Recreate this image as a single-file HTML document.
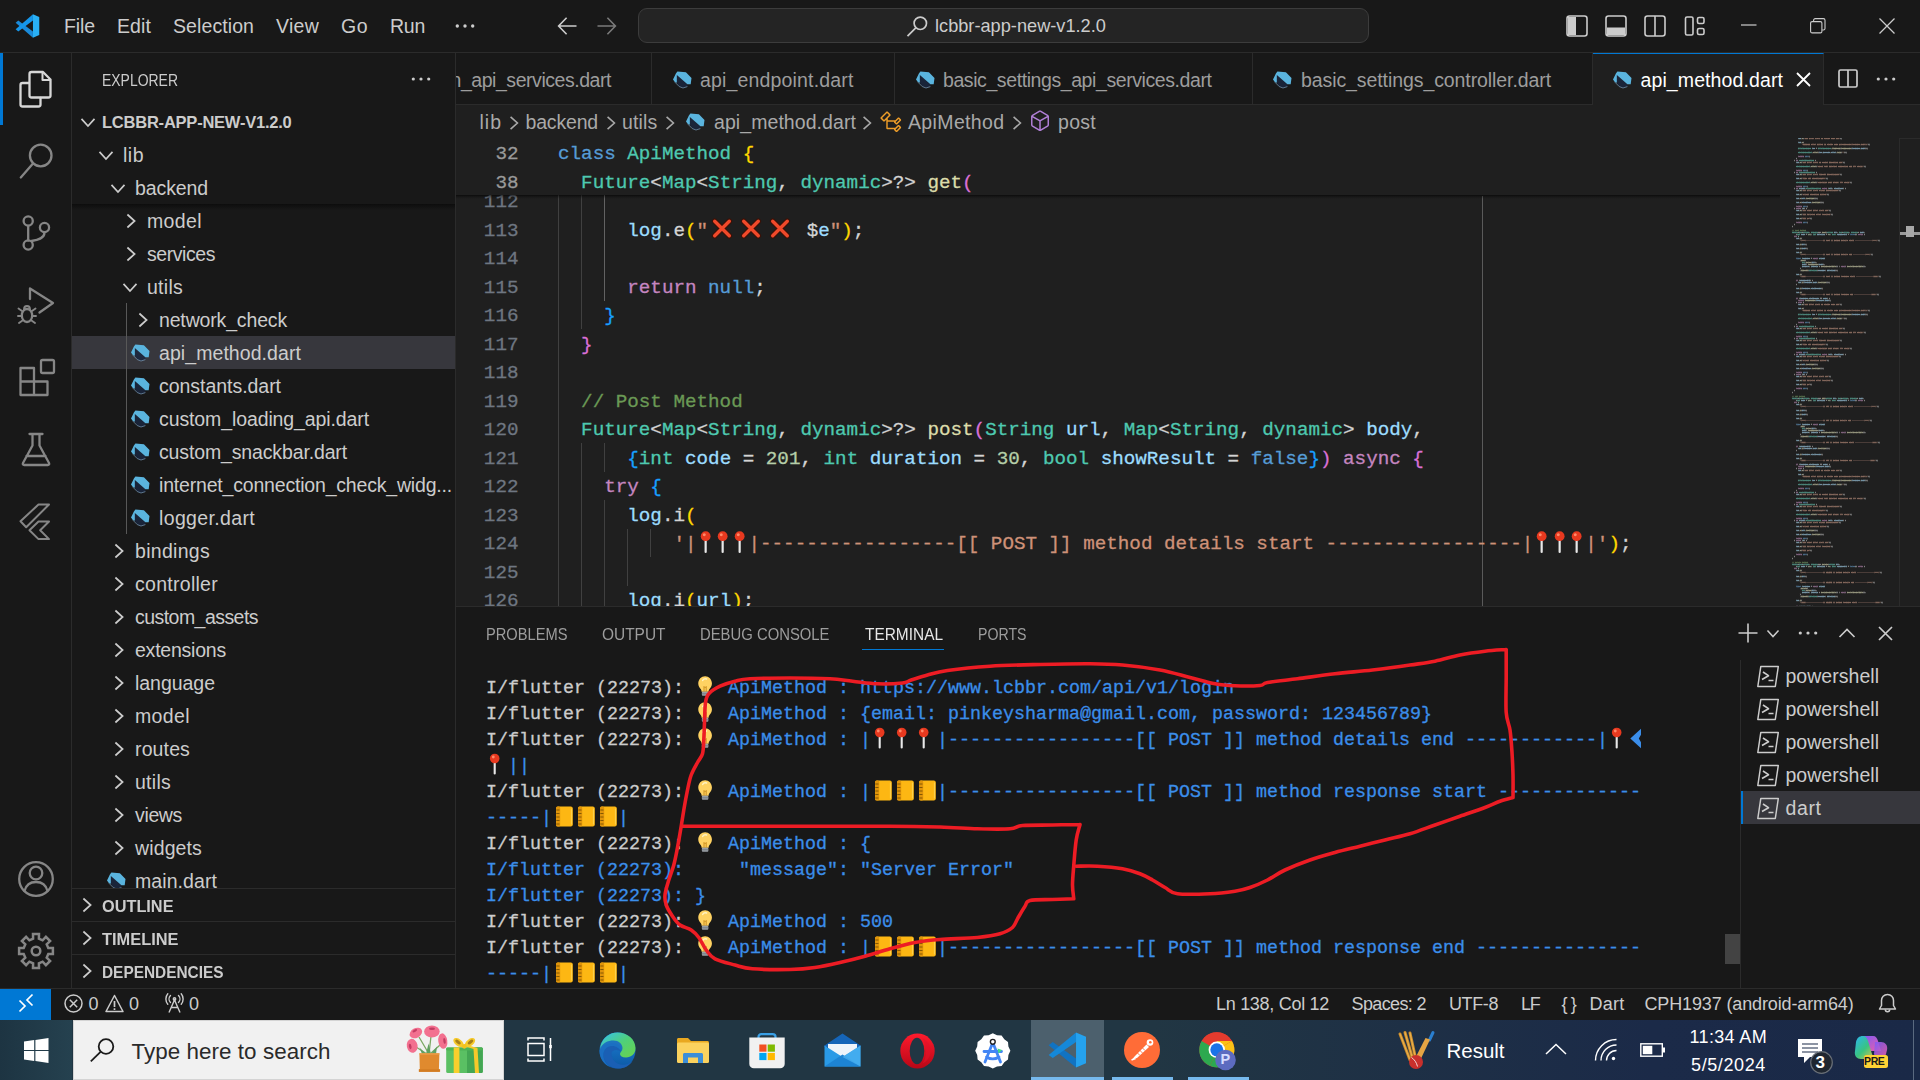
<!DOCTYPE html>
<html lang="en"><head><meta charset="utf-8"><title>api_method.dart - lcbbr-app-new-v1.2.0 - Visual Studio Code</title>
<style>
html,body{margin:0;padding:0;width:1920px;height:1080px;overflow:hidden;background:#181818;}
body{font-family:"Liberation Sans",sans-serif;color:#ccc;position:relative;}
.abs,.t,svg.i{position:absolute;}
.t{white-space:pre;margin:0;padding:0;}
.mono{font-family:"Liberation Mono",monospace;-webkit-text-stroke:.3px;}
svg{overflow:visible}
.box{position:absolute;box-sizing:border-box;}
</style></head><body>
<div class="box" style="left:0;top:0;width:1920px;height:53px;background:#181818;border-bottom:1px solid #2b2b2b"></div>
<svg class="i" style="left:15px;top:14px" width="24.5" height="24" viewBox="0 0 24 24">
<polygon points="0.4,8.8 3,6.6 17.7,17.6 17.7,23.7" fill="#1a8ad9"/>
<polygon points="17.7,0.3 17.7,6.6 3,17.4 0.4,15.3" fill="#1596ea"/>
<polygon points="17.7,0.3 24,3.1 24,20.9 17.7,23.7 17.7,17.4 17.7,6.6" fill="#29b0f5"/>
</svg>
<div class="t " style="left:64.0px;top:10.5px;line-height:31px;font-size:19.5px;color:#cccccc;letter-spacing:-0.105px;">File</div>
<div class="t " style="left:117.0px;top:10.5px;line-height:31px;font-size:19.5px;color:#cccccc;letter-spacing:0.100px;">Edit</div>
<div class="t " style="left:173.0px;top:10.5px;line-height:31px;font-size:19.5px;color:#cccccc;letter-spacing:0.087px;">Selection</div>
<div class="t " style="left:276.0px;top:10.5px;line-height:31px;font-size:19.5px;color:#cccccc;letter-spacing:0.271px;">View</div>
<div class="t " style="left:341.0px;top:10.5px;line-height:31px;font-size:19.5px;color:#cccccc;letter-spacing:0.494px;">Go</div>
<div class="t " style="left:390.0px;top:10.5px;line-height:31px;font-size:19.5px;color:#cccccc;letter-spacing:-0.257px;">Run</div>
<svg class="i" style="left:455px;top:23px" width="20" height="6"><circle cx="2.3" cy="3" r="1.7" fill="#ccc"/><circle cx="10" cy="3" r="1.7" fill="#ccc"/><circle cx="17.7" cy="3" r="1.7" fill="#ccc"/></svg>
<svg class="i" style="left:557px;top:16px" width="20" height="20" viewBox="0 0 20 20" fill="none" stroke="#cccccc" stroke-width="1.6"><path d="M19.5 10H1.8M9.6 1.8 1.6 10l8 8.2"/></svg>
<svg class="i" style="left:597px;top:16px" width="20" height="20" viewBox="0 0 20 20" fill="none" stroke="#7a7a7a" stroke-width="1.6"><path d="M0.5 10h17.7M10.4 1.8l8 8.2-8 8.2"/></svg>
<div class="box" style="left:638px;top:8px;width:731px;height:35px;background:#242424;border:1px solid #3c3c3c;border-radius:9px"></div>
<svg class="i" style="left:906px;top:15px" width="23" height="23" viewBox="0 0 23 23" fill="none" stroke="#cccccc" stroke-width="1.7"><circle cx="14.3" cy="8.3" r="6.2"/><path d="M9.8 12.8 1.5 21.2"/></svg>
<div class="t " style="left:935.0px;top:11.5px;line-height:29px;font-size:18.2px;color:#cccccc;letter-spacing:0.002px;">lcbbr-app-new-v1.2.0</div>
<svg class="i" style="left:1565.5px;top:15px" width="22" height="22" viewBox="0 0 22 22" fill="none" stroke="#cccccc" stroke-width="1.6"><rect x="1" y="1" width="20" height="20" rx="2.5"/><path d="M2 2h8v18H2z" fill="#cccccc" stroke="none"/></svg>
<svg class="i" style="left:1605px;top:15px" width="22" height="22" viewBox="0 0 22 22" fill="none" stroke="#cccccc" stroke-width="1.6"><rect x="1" y="1" width="20" height="20" rx="2.5"/><path d="M2 12.5h18V20H2z" fill="#cccccc" stroke="none"/></svg>
<svg class="i" style="left:1643.5px;top:15px" width="22" height="22" viewBox="0 0 22 22" fill="none" stroke="#cccccc" stroke-width="1.6"><rect x="1" y="1" width="20" height="20" rx="2.5"/><path d="M11 1v20"/></svg>
<svg class="i" style="left:1683.5px;top:15px" width="22" height="22" viewBox="0 0 22 22" fill="none" stroke="#cccccc" stroke-width="1.6"><rect x="1.5" y="2" width="7.5" height="18" rx="1.5"/><rect x="13.5" y="2.5" width="6.5" height="6" rx="1.5"/><rect x="13.5" y="13.5" width="6.5" height="6" rx="1.5"/></svg>
<svg class="i" style="left:1741px;top:24px" width="16" height="2"><rect width="15.5" height="1.2" y="0.4" fill="#cccccc"/></svg>
<svg class="i" style="left:1810px;top:18px" width="16" height="16" viewBox="0 0 16 16" fill="none" stroke="#cccccc" stroke-width="1.1"><rect x="0.6" y="3.6" width="11.3" height="11.3" rx="1.5"/><path d="M3.6 3.4V2.2c0-.9.7-1.6 1.6-1.6h8.2c.9 0 1.6.7 1.6 1.6v8.2c0 .9-.7 1.6-1.6 1.6h-1.2"/></svg>
<svg class="i" style="left:1879px;top:18px" width="16" height="16" viewBox="0 0 16 16" fill="none" stroke="#cccccc" stroke-width="1.3"><path d="M0.5 0.5l15 15M15.5 0.5l-15 15"/></svg>
<div class="box" style="left:0;top:53px;width:72px;height:935px;background:#181818;border-right:1px solid #2b2b2b"></div>
<div class="box" style="left:0;top:53px;width:3px;height:72px;background:#0078d4"></div>
<svg class="i" style="left:0;top:0" width="72" height="1080" viewBox="0 0 72 1080" fill="none" stroke-width="2.3" stroke-linejoin="round" stroke-linecap="round">
<g stroke="#d7d7d7">
<path d="M31.5 72h11.5l7.5 7.5v16a2 2 0 0 1-2 2h-17a2 2 0 0 1-2-2v-21.500a2 2 0 0 1 2-2z"/>
<path d="M42.500 72.500v7.500h7.500" stroke-width="2"/>
<path d="M29 83h-6.500a2 2 0 0 0-2 2v19.500a2 2 0 0 0 2 2h16a2 2 0 0 0 2-2v-6.500"/>
</g>
<g stroke="#868686">
<circle cx="40.700" cy="155.500" r="10.800"/><path d="M33 163.500 20.800 177.500"/>
<circle cx="28.200" cy="221" r="4.600"/><circle cx="44.500" cy="227.500" r="4.600"/><circle cx="28.200" cy="245" r="4.600"/>
<path d="M28.200 226v14.500M44.500 232.500c0 6-7 7.500-13 8.500"/>
<path d="M30 299v-10.500l23 14.500-13.500 9.500"/>
<ellipse cx="27" cy="315.500" rx="5.200" ry="6.500"/><path d="M22 311l-3.500-2.500M32 311l3.500-2.500M21.500 316h-3.500M32.500 316h3.500M22.500 320.500l-3.500 2.500M31.500 320.500l3.500 2.500M24 309.500c0-2 1.200-3.500 3-3.500s3 1.500 3 3.500" stroke-width="1.900"/>
<path d="M20.500 368h13.500v13.500h13.500v13.500h-27v-27zM34 381.500h-13.500M34 381.500v13.500" /><rect x="41" y="360" width="13" height="13" rx="1.500"/>
<path d="M29.500 434h13M32.500 434.500v11l-9.500 17.500c-.6 1.200 0 2 1.200 2h23.600c1.200 0 1.800-.8 1.200-2l-9.500-17.500v-11M26.500 456h19"/>
<path d="M38.500 504.500h10.500L26.200 527.300 20.500 521.300zM38.500 521.500h10.500l-8.800 8.800 8.800 8.800h-10.500l-9-8.800z" stroke-width="2"/>
<circle cx="36" cy="879" r="16.800"/><circle cx="36" cy="873" r="6.300"/><path d="M24.500 891c1.500-6 6-9 11.500-9s10 3 11.500 9"/>
<path d="M33.0 934.1 L39.0 934.1 L38.9 938.7 L42.6 940.3 L45.9 936.9 L50.1 941.1 L46.7 944.4 L48.3 948.1 L52.9 948.0 L52.9 954.0 L48.3 953.9 L46.7 957.6 L50.1 960.9 L45.9 965.1 L42.6 961.7 L38.9 963.3 L39.0 967.9 L33.0 967.9 L33.1 963.3 L29.4 961.7 L26.1 965.1 L21.9 960.9 L25.3 957.6 L23.7 953.9 L19.1 954.0 L19.1 948.0 L23.7 948.1 L25.3 944.4 L21.9 941.1 L26.1 936.9 L29.4 940.3 L33.1 938.7Z" stroke-linejoin="miter" stroke-width="2.5"/><circle cx="36" cy="951" r="4.300" stroke-width="2.5"/>
</g>
</svg>
<div class="box" style="left:72px;top:53px;width:384px;height:935px;background:#181818;border-right:1px solid #2b2b2b"></div>
<div class="t " style="left:102.0px;top:67.0px;line-height:26px;font-size:16.5px;color:#cccccc;transform-origin:0 50%;transform:scaleX(0.8457);">EXPLORER</div>
<svg class="i" style="left:411px;top:75.500px" width="20" height="6"><circle cx="2.300" cy="3" r="1.600" fill="#ccc"/><circle cx="10" cy="3" r="1.600" fill="#ccc"/><circle cx="17.700" cy="3" r="1.600" fill="#ccc"/></svg>
<div class="box" style="left:72px;top:336px;width:383px;height:33px;background:#37373d"></div>
<div class="box" style="left:126px;top:303px;width:1px;height:231px;background:#585858"></div>
<div class="box" style="left:72px;top:204px;width:383px;height:6px;background:linear-gradient(#0d0d0d,rgba(24,24,24,0))"></div>
<svg class="i" style="left:78px;top:111.5px" width="20" height="20" viewBox="-10 -10 20 20" fill="none" stroke="#cccccc" stroke-width="1.7"><path d="M-6.5 -3.1L0 4.1L6.5 -3.1"/></svg>
<div class="t " style="left:102.0px;top:108.5px;line-height:26px;font-size:16.5px;color:#cccccc;font-weight:700;letter-spacing:-0.226px;">LCBBR-APP-NEW-V1.2.0</div>
<svg class="i" style="left:96px;top:144.5px" width="20" height="20" viewBox="-10 -10 20 20" fill="none" stroke="#cccccc" stroke-width="1.7"><path d="M-6.5 -3.1L0 4.1L6.5 -3.1"/></svg>
<div class="t " style="left:123.0px;top:139.8px;line-height:31px;font-size:19.5px;color:#cccccc;letter-spacing:0.497px;">lib</div>
<svg class="i" style="left:108px;top:177.5px" width="20" height="20" viewBox="-10 -10 20 20" fill="none" stroke="#cccccc" stroke-width="1.7"><path d="M-6.5 -3.1L0 4.1L6.5 -3.1"/></svg>
<div class="t " style="left:135.0px;top:172.8px;line-height:31px;font-size:19.5px;color:#cccccc;letter-spacing:-0.104px;">backend</div>
<svg class="i" style="left:121px;top:210.5px" width="20" height="20" viewBox="-10 -10 20 20" fill="none" stroke="#cccccc" stroke-width="1.7"><path d="M-3.6 -6.5L3.6 0L-3.6 6.5"/></svg>
<div class="t " style="left:147.0px;top:205.8px;line-height:31px;font-size:19.5px;color:#cccccc;letter-spacing:0.378px;">model</div>
<svg class="i" style="left:121px;top:243.5px" width="20" height="20" viewBox="-10 -10 20 20" fill="none" stroke="#cccccc" stroke-width="1.7"><path d="M-3.6 -6.5L3.6 0L-3.6 6.5"/></svg>
<div class="t " style="left:147.0px;top:238.8px;line-height:31px;font-size:19.5px;color:#cccccc;letter-spacing:-0.440px;">services</div>
<svg class="i" style="left:120px;top:276.5px" width="20" height="20" viewBox="-10 -10 20 20" fill="none" stroke="#cccccc" stroke-width="1.7"><path d="M-6.5 -3.1L0 4.1L6.5 -3.1"/></svg>
<div class="t " style="left:147.0px;top:271.8px;line-height:31px;font-size:19.5px;color:#cccccc;letter-spacing:0.265px;">utils</div>
<svg class="i" style="left:133px;top:309.5px" width="20" height="20" viewBox="-10 -10 20 20" fill="none" stroke="#cccccc" stroke-width="1.7"><path d="M-3.6 -6.5L3.6 0L-3.6 6.5"/></svg>
<div class="t " style="left:159.0px;top:304.8px;line-height:31px;font-size:19.5px;color:#cccccc;letter-spacing:-0.159px;">network_check</div>
<svg class="i" style="left:131.0px;top:343.5px" width="18.0" height="18.0" viewBox="0 0 18 18"><path d="M3.850 4 14.400 13.200v2.200L10 16.900 6.300 15.400 3.850 11.700z" fill="#1a2740" opacity=".85"/><path d="M2.900 2.500 4.400.6l8.500.7 5.600 5.600-.8 6.300h-3.300L3.850 4v7.700L1.800 11 0 8.400z" fill="#5ab4de"/><path d="M1.800 11.100 6.300 15.600 10 17l4.400-1.400" stroke="#86abc9" stroke-width=".9" fill="none" opacity=".7"/></svg>
<div class="t " style="left:159.0px;top:337.8px;line-height:31px;font-size:19.5px;color:#cccccc;letter-spacing:0.071px;">api_method.dart</div>
<svg class="i" style="left:131.0px;top:376.5px" width="18.0" height="18.0" viewBox="0 0 18 18"><path d="M3.850 4 14.400 13.200v2.200L10 16.900 6.300 15.400 3.850 11.700z" fill="#1a2740" opacity=".85"/><path d="M2.900 2.500 4.400.6l8.500.7 5.600 5.600-.8 6.300h-3.300L3.850 4v7.700L1.800 11 0 8.400z" fill="#5ab4de"/><path d="M1.800 11.100 6.300 15.600 10 17l4.400-1.400" stroke="#86abc9" stroke-width=".9" fill="none" opacity=".7"/></svg>
<div class="t " style="left:159.0px;top:370.8px;line-height:31px;font-size:19.5px;color:#cccccc;letter-spacing:-0.035px;">constants.dart</div>
<svg class="i" style="left:131.0px;top:409.5px" width="18.0" height="18.0" viewBox="0 0 18 18"><path d="M3.850 4 14.400 13.200v2.200L10 16.900 6.300 15.400 3.850 11.700z" fill="#1a2740" opacity=".85"/><path d="M2.900 2.500 4.400.6l8.500.7 5.600 5.600-.8 6.300h-3.300L3.850 4v7.700L1.800 11 0 8.400z" fill="#5ab4de"/><path d="M1.800 11.100 6.300 15.600 10 17l4.400-1.400" stroke="#86abc9" stroke-width=".9" fill="none" opacity=".7"/></svg>
<div class="t " style="left:159.0px;top:403.8px;line-height:31px;font-size:19.5px;color:#cccccc;letter-spacing:-0.108px;">custom_loading_api.dart</div>
<svg class="i" style="left:131.0px;top:442.5px" width="18.0" height="18.0" viewBox="0 0 18 18"><path d="M3.850 4 14.400 13.200v2.200L10 16.900 6.300 15.400 3.850 11.700z" fill="#1a2740" opacity=".85"/><path d="M2.900 2.500 4.400.6l8.500.7 5.600 5.600-.8 6.300h-3.300L3.850 4v7.700L1.800 11 0 8.400z" fill="#5ab4de"/><path d="M1.800 11.100 6.300 15.600 10 17l4.400-1.400" stroke="#86abc9" stroke-width=".9" fill="none" opacity=".7"/></svg>
<div class="t " style="left:159.0px;top:436.8px;line-height:31px;font-size:19.5px;color:#cccccc;letter-spacing:-0.138px;">custom_snackbar.dart</div>
<svg class="i" style="left:131.0px;top:475.5px" width="18.0" height="18.0" viewBox="0 0 18 18"><path d="M3.850 4 14.400 13.200v2.200L10 16.900 6.300 15.400 3.850 11.700z" fill="#1a2740" opacity=".85"/><path d="M2.900 2.500 4.400.6l8.500.7 5.600 5.600-.8 6.300h-3.300L3.850 4v7.700L1.800 11 0 8.400z" fill="#5ab4de"/><path d="M1.800 11.100 6.300 15.600 10 17l4.400-1.400" stroke="#86abc9" stroke-width=".9" fill="none" opacity=".7"/></svg>
<div class="t " style="left:159.0px;top:469.8px;line-height:31px;font-size:19.5px;color:#cccccc;letter-spacing:-0.188px;">internet_connection_check_widg...</div>
<svg class="i" style="left:131.0px;top:508.5px" width="18.0" height="18.0" viewBox="0 0 18 18"><path d="M3.850 4 14.400 13.200v2.200L10 16.900 6.300 15.400 3.850 11.700z" fill="#1a2740" opacity=".85"/><path d="M2.900 2.500 4.400.6l8.500.7 5.600 5.600-.8 6.300h-3.300L3.850 4v7.700L1.800 11 0 8.400z" fill="#5ab4de"/><path d="M1.800 11.100 6.300 15.600 10 17l4.400-1.400" stroke="#86abc9" stroke-width=".9" fill="none" opacity=".7"/></svg>
<div class="t " style="left:159.0px;top:502.8px;line-height:31px;font-size:19.5px;color:#cccccc;letter-spacing:0.350px;">logger.dart</div>
<svg class="i" style="left:109px;top:540.5px" width="20" height="20" viewBox="-10 -10 20 20" fill="none" stroke="#cccccc" stroke-width="1.7"><path d="M-3.6 -6.5L3.6 0L-3.6 6.5"/></svg>
<div class="t " style="left:135.0px;top:535.8px;line-height:31px;font-size:19.5px;color:#cccccc;letter-spacing:0.295px;">bindings</div>
<svg class="i" style="left:109px;top:573.5px" width="20" height="20" viewBox="-10 -10 20 20" fill="none" stroke="#cccccc" stroke-width="1.7"><path d="M-3.6 -6.5L3.6 0L-3.6 6.5"/></svg>
<div class="t " style="left:135.0px;top:568.8px;line-height:31px;font-size:19.5px;color:#cccccc;letter-spacing:0.280px;">controller</div>
<svg class="i" style="left:109px;top:606.5px" width="20" height="20" viewBox="-10 -10 20 20" fill="none" stroke="#cccccc" stroke-width="1.7"><path d="M-3.6 -6.5L3.6 0L-3.6 6.5"/></svg>
<div class="t " style="left:135.0px;top:601.8px;line-height:31px;font-size:19.5px;color:#cccccc;letter-spacing:-0.543px;">custom_assets</div>
<svg class="i" style="left:109px;top:639.5px" width="20" height="20" viewBox="-10 -10 20 20" fill="none" stroke="#cccccc" stroke-width="1.7"><path d="M-3.6 -6.5L3.6 0L-3.6 6.5"/></svg>
<div class="t " style="left:135.0px;top:634.8px;line-height:31px;font-size:19.5px;color:#cccccc;letter-spacing:-0.223px;">extensions</div>
<svg class="i" style="left:109px;top:672.5px" width="20" height="20" viewBox="-10 -10 20 20" fill="none" stroke="#cccccc" stroke-width="1.7"><path d="M-3.6 -6.5L3.6 0L-3.6 6.5"/></svg>
<div class="t " style="left:135.0px;top:667.8px;line-height:31px;font-size:19.5px;color:#cccccc;letter-spacing:-0.031px;">language</div>
<svg class="i" style="left:109px;top:705.5px" width="20" height="20" viewBox="-10 -10 20 20" fill="none" stroke="#cccccc" stroke-width="1.7"><path d="M-3.6 -6.5L3.6 0L-3.6 6.5"/></svg>
<div class="t " style="left:135.0px;top:700.8px;line-height:31px;font-size:19.5px;color:#cccccc;letter-spacing:0.378px;">model</div>
<svg class="i" style="left:109px;top:738.5px" width="20" height="20" viewBox="-10 -10 20 20" fill="none" stroke="#cccccc" stroke-width="1.7"><path d="M-3.6 -6.5L3.6 0L-3.6 6.5"/></svg>
<div class="t " style="left:135.0px;top:733.8px;line-height:31px;font-size:19.5px;color:#cccccc;letter-spacing:0.134px;">routes</div>
<svg class="i" style="left:109px;top:771.5px" width="20" height="20" viewBox="-10 -10 20 20" fill="none" stroke="#cccccc" stroke-width="1.7"><path d="M-3.6 -6.5L3.6 0L-3.6 6.5"/></svg>
<div class="t " style="left:135.0px;top:766.8px;line-height:31px;font-size:19.5px;color:#cccccc;letter-spacing:0.265px;">utils</div>
<svg class="i" style="left:109px;top:804.5px" width="20" height="20" viewBox="-10 -10 20 20" fill="none" stroke="#cccccc" stroke-width="1.7"><path d="M-3.6 -6.5L3.6 0L-3.6 6.5"/></svg>
<div class="t " style="left:135.0px;top:799.8px;line-height:31px;font-size:19.5px;color:#cccccc;letter-spacing:-0.352px;">views</div>
<svg class="i" style="left:109px;top:837.5px" width="20" height="20" viewBox="-10 -10 20 20" fill="none" stroke="#cccccc" stroke-width="1.7"><path d="M-3.6 -6.5L3.6 0L-3.6 6.5"/></svg>
<div class="t " style="left:135.0px;top:832.8px;line-height:31px;font-size:19.5px;color:#cccccc;letter-spacing:0.126px;">widgets</div>
<svg class="i" style="left:107.0px;top:871.5px" width="18.0" height="18.0" viewBox="0 0 18 18"><path d="M3.850 4 14.400 13.200v2.200L10 16.900 6.300 15.400 3.850 11.700z" fill="#1a2740" opacity=".85"/><path d="M2.900 2.500 4.400.6l8.500.7 5.600 5.600-.8 6.300h-3.300L3.850 4v7.700L1.800 11 0 8.400z" fill="#5ab4de"/><path d="M1.800 11.100 6.300 15.600 10 17l4.400-1.400" stroke="#86abc9" stroke-width=".9" fill="none" opacity=".7"/></svg>
<div class="t " style="left:135.0px;top:865.8px;line-height:31px;font-size:19.5px;color:#cccccc;letter-spacing:0.079px;">main.dart</div>
<div class="box" style="left:72px;top:888px;width:383px;height:33px;background:#181818;border-top:1px solid #2b2b2b"></div>
<svg class="i" style="left:77.3px;top:894.8px" width="20" height="20" viewBox="-10 -10 20 20" fill="none" stroke="#cccccc" stroke-width="1.7"><path d="M-3.6 -6.5L3.6 0L-3.6 6.5"/></svg>
<div class="t " style="left:102.0px;top:892.5px;line-height:26px;font-size:16.5px;color:#cccccc;font-weight:700;transform-origin:0 50%;transform:scaleX(0.9874);">OUTLINE</div>
<div class="box" style="left:72px;top:921px;width:383px;height:33px;background:#181818;border-top:1px solid #2b2b2b"></div>
<svg class="i" style="left:77.3px;top:927.8px" width="20" height="20" viewBox="-10 -10 20 20" fill="none" stroke="#cccccc" stroke-width="1.7"><path d="M-3.6 -6.5L3.6 0L-3.6 6.5"/></svg>
<div class="t " style="left:102.0px;top:925.5px;line-height:26px;font-size:16.5px;color:#cccccc;font-weight:700;transform-origin:0 50%;transform:scaleX(0.9935);">TIMELINE</div>
<div class="box" style="left:72px;top:954px;width:383px;height:33px;background:#181818;border-top:1px solid #2b2b2b"></div>
<svg class="i" style="left:77.3px;top:960.8px" width="20" height="20" viewBox="-10 -10 20 20" fill="none" stroke="#cccccc" stroke-width="1.7"><path d="M-3.6 -6.5L3.6 0L-3.6 6.5"/></svg>
<div class="t " style="left:102.0px;top:958.5px;line-height:26px;font-size:16.5px;color:#cccccc;font-weight:700;transform-origin:0 50%;transform:scaleX(0.9332);">DEPENDENCIES</div>
<div class="box" style="left:456px;top:53px;width:1464px;height:553px;background:#1f1f1f"></div>
<div class="box" style="left:456px;top:53px;width:1464px;height:52px;background:#181818;border-bottom:1px solid #2b2b2b"></div>
<div class="box" style="left:456px;top:53px;width:196px;height:51px;border-right:1px solid #2b2b2b"></div>
<div class="box" style="left:652px;top:53px;width:242.5px;height:51px;border-right:1px solid #2b2b2b"></div>
<div class="box" style="left:894.5px;top:53px;width:358.0px;height:51px;border-right:1px solid #2b2b2b"></div>
<div class="box" style="left:1252.5px;top:53px;width:340.0px;height:51px;border-right:1px solid #2b2b2b"></div>
<div class="box" style="left:1593px;top:53px;width:231px;height:52px;background:#1f1f1f;border-right:1px solid #2b2b2b;border-top:1.5px solid #0078d4"></div>
<div class="box" style="left:456px;top:60px;width:190px;height:40px;overflow:hidden"><div class="t " style="left:-5.5px;top:4.5px;line-height:31px;font-size:19.5px;color:#9d9d9d;letter-spacing:-0.452px;">n_api_services.dart</div>
</div>
<svg class="i" style="left:673.0px;top:70.5px" width="18.0" height="18.0" viewBox="0 0 18 18"><path d="M3.850 4 14.400 13.200v2.200L10 16.900 6.300 15.400 3.850 11.700z" fill="#1a2740" opacity=".85"/><path d="M2.900 2.500 4.400.6l8.500.7 5.600 5.600-.8 6.300h-3.300L3.850 4v7.700L1.800 11 0 8.400z" fill="#5ab4de"/><path d="M1.800 11.100 6.300 15.600 10 17l4.400-1.400" stroke="#86abc9" stroke-width=".9" fill="none" opacity=".7"/></svg>
<div class="t " style="left:700.0px;top:64.5px;line-height:31px;font-size:19.5px;color:#9d9d9d;letter-spacing:0.164px;">api_endpoint.dart</div>
<svg class="i" style="left:915.5px;top:70.5px" width="18.0" height="18.0" viewBox="0 0 18 18"><path d="M3.850 4 14.400 13.200v2.200L10 16.900 6.300 15.400 3.850 11.700z" fill="#1a2740" opacity=".85"/><path d="M2.900 2.500 4.400.6l8.500.7 5.600 5.600-.8 6.300h-3.300L3.850 4v7.700L1.800 11 0 8.400z" fill="#5ab4de"/><path d="M1.800 11.100 6.300 15.600 10 17l4.400-1.400" stroke="#86abc9" stroke-width=".9" fill="none" opacity=".7"/></svg>
<div class="t " style="left:943.0px;top:64.5px;line-height:31px;font-size:19.5px;color:#9d9d9d;letter-spacing:-0.416px;">basic_settings_api_services.dart</div>
<svg class="i" style="left:1273.2px;top:70.5px" width="18.0" height="18.0" viewBox="0 0 18 18"><path d="M3.850 4 14.400 13.200v2.200L10 16.900 6.300 15.400 3.850 11.700z" fill="#1a2740" opacity=".85"/><path d="M2.900 2.500 4.400.6l8.500.7 5.600 5.600-.8 6.300h-3.300L3.850 4v7.700L1.800 11 0 8.400z" fill="#5ab4de"/><path d="M1.800 11.100 6.300 15.600 10 17l4.400-1.400" stroke="#86abc9" stroke-width=".9" fill="none" opacity=".7"/></svg>
<div class="t " style="left:1301.0px;top:64.5px;line-height:31px;font-size:19.5px;color:#9d9d9d;letter-spacing:-0.085px;">basic_settings_controller.dart</div>
<svg class="i" style="left:1613.0px;top:70.5px" width="18.0" height="18.0" viewBox="0 0 18 18"><path d="M3.850 4 14.400 13.200v2.200L10 16.900 6.300 15.400 3.850 11.700z" fill="#1a2740" opacity=".85"/><path d="M2.900 2.500 4.400.6l8.500.7 5.600 5.600-.8 6.300h-3.300L3.850 4v7.700L1.800 11 0 8.400z" fill="#5ab4de"/><path d="M1.800 11.100 6.300 15.600 10 17l4.400-1.400" stroke="#86abc9" stroke-width=".9" fill="none" opacity=".7"/></svg>
<div class="t " style="left:1640.5px;top:64.5px;line-height:31px;font-size:19.5px;color:#ffffff;letter-spacing:0.105px;">api_method.dart</div>
<svg class="i" style="left:1795.5px;top:71.500px" width="15" height="15" viewBox="0 0 15 15" fill="none" stroke="#ffffff" stroke-width="1.800"><path d="M1 1l13 13M14 1 1 14"/></svg>
<svg class="i" style="left:1837.5px;top:68.5px" width="20" height="19" viewBox="0 0 20 19" fill="none" stroke="#cccccc" stroke-width="1.700"><rect x="1" y="1" width="18" height="17" rx="1.500"/><path d="M10 1v17"/></svg>
<svg class="i" style="left:1875.5px;top:76px" width="20" height="6"><circle cx="2.300" cy="3" r="1.600" fill="#ccc"/><circle cx="10" cy="3" r="1.600" fill="#ccc"/><circle cx="17.700" cy="3" r="1.600" fill="#ccc"/></svg>
<div class="t " style="left:479.5px;top:106.5px;line-height:31px;font-size:19.5px;color:#a9a9a9;letter-spacing:0.997px;">lib</div>
<svg class="i" style="left:504px;top:112.5px" width="20" height="20" viewBox="-10 -10 20 20" fill="none" stroke="#a9a9a9" stroke-width="1.6"><path d="M-3.42 -6.175L3.42 0L-3.42 6.175"/></svg>
<div class="t " style="left:525.5px;top:106.5px;line-height:31px;font-size:19.5px;color:#a9a9a9;letter-spacing:-0.175px;">backend</div>
<svg class="i" style="left:601px;top:112.5px" width="20" height="20" viewBox="-10 -10 20 20" fill="none" stroke="#a9a9a9" stroke-width="1.6"><path d="M-3.42 -6.175L3.42 0L-3.42 6.175"/></svg>
<div class="t " style="left:622.0px;top:106.5px;line-height:31px;font-size:19.5px;color:#a9a9a9;letter-spacing:0.165px;">utils</div>
<svg class="i" style="left:660px;top:112.5px" width="20" height="20" viewBox="-10 -10 20 20" fill="none" stroke="#a9a9a9" stroke-width="1.6"><path d="M-3.42 -6.175L3.42 0L-3.42 6.175"/></svg>
<svg class="i" style="left:686.3px;top:113px" width="18.0" height="18.0" viewBox="0 0 18 18"><path d="M3.850 4 14.400 13.200v2.200L10 16.900 6.300 15.400 3.850 11.700z" fill="#1a2740" opacity=".85"/><path d="M2.900 2.500 4.400.6l8.500.7 5.600 5.600-.8 6.300h-3.300L3.850 4v7.700L1.800 11 0 8.400z" fill="#5ab4de"/><path d="M1.800 11.100 6.300 15.600 10 17l4.400-1.400" stroke="#86abc9" stroke-width=".9" fill="none" opacity=".7"/></svg>
<div class="t " style="left:714.0px;top:106.5px;line-height:31px;font-size:19.5px;color:#a9a9a9;letter-spacing:0.071px;">api_method.dart</div>
<svg class="i" style="left:857px;top:112.5px" width="20" height="20" viewBox="-10 -10 20 20" fill="none" stroke="#a9a9a9" stroke-width="1.6"><path d="M-3.42 -6.175L3.42 0L-3.42 6.175"/></svg>
<svg class="i" style="left:879.1px;top:109.6px" width="24" height="24" viewBox="0 0 16 16" fill="#ee9d28"><path d="M11.34 9.71h.71l2.67-2.67v-.71L13.38 5h-.7l-1.82 1.81h-5V5.56l1.86-1.850V3l-2-2H5L1 5v.71l2 2h.71l1.140-1.150v5.790l.5.5H10v.52l1.330 1.340h.71l2.670-2.670v-.71L13.370 10h-.7l-1.860 1.850h-5v-4H10v.48l1.340 1.380zm1.690-3.650l.63.63-2 2-.63-.63 2-2zm0 5l.63.63-2 2-.63-.63 2-2zM3.350 6.650l-1.290-1.300 3.290-3.290 1.300 1.290-3.300 3.300z"/></svg>
<div class="t " style="left:908.0px;top:106.5px;line-height:31px;font-size:19.5px;color:#a9a9a9;letter-spacing:0.364px;">ApiMethod</div>
<svg class="i" style="left:1007px;top:112.5px" width="20" height="20" viewBox="-10 -10 20 20" fill="none" stroke="#a9a9a9" stroke-width="1.6"><path d="M-3.42 -6.175L3.42 0L-3.42 6.175"/></svg>
<svg class="i" style="left:1028.3px;top:108.7px" width="24" height="24" viewBox="0 0 16 16" fill="#b180d7"><path d="M13.510 4l-5-3h-1l-5 3-.49.860v6l.49.850 5 3h1l5-3 .49-.850v-6L13.510 4zm-6 9.560l-4.500-2.700V5.700l4.500 2.450v5.410zM3.270 4.700l4.740-2.840 4.740 2.840-4.740 2.590L3.270 4.700zm9.740 6.160l-4.500 2.700V8.150l4.500-2.450v5.160z"/></svg>
<div class="t " style="left:1058.0px;top:106.5px;line-height:31px;font-size:19.5px;color:#a9a9a9;letter-spacing:0.286px;">post</div>
<div class="box" style="left:0;top:195px;width:1920px;height:411px;overflow:hidden"><div class="box" style="left:0;top:-195px;width:1920px;height:1080px">
<div class="box" style="left:558.0px;top:186.5px;width:1px;height:28.5px;background:#404040"></div><div class="box" style="left:581.1px;top:186.5px;width:1px;height:28.5px;background:#404040"></div><div class="box" style="left:604.2px;top:186.5px;width:1px;height:28.5px;background:#626262"></div>
<div class="box" style="left:558.0px;top:215.0px;width:1px;height:28.5px;background:#404040"></div><div class="box" style="left:581.1px;top:215.0px;width:1px;height:28.5px;background:#404040"></div><div class="box" style="left:604.2px;top:215.0px;width:1px;height:28.5px;background:#626262"></div>
<div class="box" style="left:558.0px;top:243.5px;width:1px;height:28.5px;background:#404040"></div><div class="box" style="left:581.1px;top:243.5px;width:1px;height:28.5px;background:#404040"></div><div class="box" style="left:604.2px;top:243.5px;width:1px;height:28.5px;background:#626262"></div>
<div class="box" style="left:558.0px;top:272.0px;width:1px;height:28.5px;background:#404040"></div><div class="box" style="left:581.1px;top:272.0px;width:1px;height:28.5px;background:#404040"></div><div class="box" style="left:604.2px;top:272.0px;width:1px;height:28.5px;background:#626262"></div>
<div class="box" style="left:558.0px;top:300.5px;width:1px;height:28.5px;background:#404040"></div><div class="box" style="left:581.1px;top:300.5px;width:1px;height:28.5px;background:#404040"></div>
<div class="box" style="left:558.0px;top:329.0px;width:1px;height:28.5px;background:#404040"></div>
<div class="box" style="left:558.0px;top:357.5px;width:1px;height:28.5px;background:#404040"></div>
<div class="box" style="left:558.0px;top:386.0px;width:1px;height:28.5px;background:#404040"></div>
<div class="box" style="left:558.0px;top:414.5px;width:1px;height:28.5px;background:#404040"></div>
<div class="box" style="left:558.0px;top:443.0px;width:1px;height:28.5px;background:#404040"></div><div class="box" style="left:581.1px;top:443.0px;width:1px;height:28.5px;background:#404040"></div><div class="box" style="left:604.2px;top:443.0px;width:1px;height:28.5px;background:#404040"></div>
<div class="box" style="left:558.0px;top:471.5px;width:1px;height:28.5px;background:#404040"></div><div class="box" style="left:581.1px;top:471.5px;width:1px;height:28.5px;background:#404040"></div>
<div class="box" style="left:558.0px;top:500.0px;width:1px;height:28.5px;background:#404040"></div><div class="box" style="left:581.1px;top:500.0px;width:1px;height:28.5px;background:#404040"></div><div class="box" style="left:604.2px;top:500.0px;width:1px;height:28.5px;background:#404040"></div>
<div class="box" style="left:558.0px;top:528.5px;width:1px;height:28.5px;background:#404040"></div><div class="box" style="left:581.1px;top:528.5px;width:1px;height:28.5px;background:#404040"></div><div class="box" style="left:604.2px;top:528.5px;width:1px;height:28.5px;background:#404040"></div><div class="box" style="left:627.3px;top:528.5px;width:1px;height:28.5px;background:#404040"></div><div class="box" style="left:650.4px;top:528.5px;width:1px;height:28.5px;background:#404040"></div>
<div class="box" style="left:558.0px;top:557.0px;width:1px;height:28.5px;background:#404040"></div><div class="box" style="left:581.1px;top:557.0px;width:1px;height:28.5px;background:#404040"></div><div class="box" style="left:604.2px;top:557.0px;width:1px;height:28.5px;background:#404040"></div><div class="box" style="left:627.3px;top:557.0px;width:1px;height:28.5px;background:#404040"></div>
<div class="box" style="left:558.0px;top:585.5px;width:1px;height:28.5px;background:#404040"></div><div class="box" style="left:581.1px;top:585.5px;width:1px;height:28.5px;background:#404040"></div><div class="box" style="left:604.2px;top:585.5px;width:1px;height:28.5px;background:#404040"></div>
<div class="box" style="left:1481.7px;top:196px;width:1px;height:410px;background:#5a5a5a"></div>
<div class="t mono" style="left:456px;top:188.00px;height:28.500px;line-height:28.500px;font-size:19.24px;width:1330px;"><span style="position:absolute;left:0;width:62.500px;text-align:right;color:#6e7681">112</span><span style="position:absolute;left:102px"></span></div>
<div class="t mono" style="left:456px;top:216.50px;height:28.500px;line-height:28.500px;font-size:19.24px;width:1330px;"><span style="position:absolute;left:0;width:62.500px;text-align:right;color:#6e7681">113</span><span style="position:absolute;left:102px">      <span style="color:#9cdcfe">log</span><span style="color:#d4d4d4">.</span><span style="color:#d4d4d4">e</span><span style="color:#ffd700">(</span><span style="color:#ce9178">"</span><span style="display:inline-block;position:relative;width:29px;height:0"><svg role="img" aria-label="❌" style="position:absolute;left:0;top:-18px" width="29" height="22" viewBox="0 0 29 22"><g transform="translate(14.0 10.500)"><path d="M-7.300-7.300 7.300 7.300M7.300-7.300-7.300 7.300" stroke="#3a1208" stroke-width="5.500" stroke-linecap="round"/><path d="M-7.300-7.300 7.300 7.300M7.300-7.300-7.300 7.300" stroke="#f0492a" stroke-width="3.400" stroke-linecap="round"/></g></svg></span><span style="display:inline-block;position:relative;width:29px;height:0"><svg role="img" aria-label="❌" style="position:absolute;left:0;top:-18px" width="29" height="22" viewBox="0 0 29 22"><g transform="translate(14.0 10.500)"><path d="M-7.300-7.300 7.300 7.300M7.300-7.300-7.300 7.300" stroke="#3a1208" stroke-width="5.500" stroke-linecap="round"/><path d="M-7.300-7.300 7.300 7.300M7.300-7.300-7.300 7.300" stroke="#f0492a" stroke-width="3.400" stroke-linecap="round"/></g></svg></span><span style="display:inline-block;position:relative;width:29px;height:0"><svg role="img" aria-label="❌" style="position:absolute;left:0;top:-18px" width="29" height="22" viewBox="0 0 29 22"><g transform="translate(14.0 10.500)"><path d="M-7.300-7.300 7.300 7.300M7.300-7.300-7.300 7.300" stroke="#3a1208" stroke-width="5.500" stroke-linecap="round"/><path d="M-7.300-7.300 7.300 7.300M7.300-7.300-7.300 7.300" stroke="#f0492a" stroke-width="3.400" stroke-linecap="round"/></g></svg></span><span style="color:#ce9178"> </span><span style="color:#d4d4d4">$</span><span style="color:#9cdcfe">e</span><span style="color:#ce9178">"</span><span style="color:#ffd700">)</span><span style="color:#d4d4d4">;</span></span></div>
<div class="t mono" style="left:456px;top:245.00px;height:28.500px;line-height:28.500px;font-size:19.24px;width:1330px;"><span style="position:absolute;left:0;width:62.500px;text-align:right;color:#6e7681">114</span><span style="position:absolute;left:102px"></span></div>
<div class="t mono" style="left:456px;top:273.50px;height:28.500px;line-height:28.500px;font-size:19.24px;width:1330px;"><span style="position:absolute;left:0;width:62.500px;text-align:right;color:#6e7681">115</span><span style="position:absolute;left:102px">      <span style="color:#c586c0">return</span> <span style="color:#569cd6">null</span><span style="color:#d4d4d4">;</span></span></div>
<div class="t mono" style="left:456px;top:302.00px;height:28.500px;line-height:28.500px;font-size:19.24px;width:1330px;"><span style="position:absolute;left:0;width:62.500px;text-align:right;color:#6e7681">116</span><span style="position:absolute;left:102px">    <span style="color:#179fff">}</span></span></div>
<div class="t mono" style="left:456px;top:330.50px;height:28.500px;line-height:28.500px;font-size:19.24px;width:1330px;"><span style="position:absolute;left:0;width:62.500px;text-align:right;color:#6e7681">117</span><span style="position:absolute;left:102px">  <span style="color:#da70d6">}</span></span></div>
<div class="t mono" style="left:456px;top:359.00px;height:28.500px;line-height:28.500px;font-size:19.24px;width:1330px;"><span style="position:absolute;left:0;width:62.500px;text-align:right;color:#6e7681">118</span><span style="position:absolute;left:102px"></span></div>
<div class="t mono" style="left:456px;top:387.50px;height:28.500px;line-height:28.500px;font-size:19.24px;width:1330px;"><span style="position:absolute;left:0;width:62.500px;text-align:right;color:#6e7681">119</span><span style="position:absolute;left:102px">  <span style="color:#6a9955">// Post Method</span></span></div>
<div class="t mono" style="left:456px;top:416.00px;height:28.500px;line-height:28.500px;font-size:19.24px;width:1330px;"><span style="position:absolute;left:0;width:62.500px;text-align:right;color:#6e7681">120</span><span style="position:absolute;left:102px">  <span style="color:#4ec9b0">Future</span><span style="color:#d4d4d4">&lt;</span><span style="color:#4ec9b0">Map</span><span style="color:#d4d4d4">&lt;</span><span style="color:#4ec9b0">String</span><span style="color:#d4d4d4">, </span><span style="color:#4ec9b0">dynamic</span><span style="color:#d4d4d4">&gt;?&gt; </span><span style="color:#dcdcaa">post</span><span style="color:#da70d6">(</span><span style="color:#4ec9b0">String</span> <span style="color:#9cdcfe">url</span><span style="color:#d4d4d4">, </span><span style="color:#4ec9b0">Map</span><span style="color:#d4d4d4">&lt;</span><span style="color:#4ec9b0">String</span><span style="color:#d4d4d4">, </span><span style="color:#4ec9b0">dynamic</span><span style="color:#d4d4d4">&gt; </span><span style="color:#9cdcfe">body</span><span style="color:#d4d4d4">,</span></span></div>
<div class="t mono" style="left:456px;top:444.50px;height:28.500px;line-height:28.500px;font-size:19.24px;width:1330px;"><span style="position:absolute;left:0;width:62.500px;text-align:right;color:#6e7681">121</span><span style="position:absolute;left:102px">      <span style="color:#179fff">{</span><span style="color:#4ec9b0">int</span> <span style="color:#9cdcfe">code</span><span style="color:#d4d4d4"> = </span><span style="color:#b5cea8">201</span><span style="color:#d4d4d4">, </span><span style="color:#4ec9b0">int</span> <span style="color:#9cdcfe">duration</span><span style="color:#d4d4d4"> = </span><span style="color:#b5cea8">30</span><span style="color:#d4d4d4">, </span><span style="color:#4ec9b0">bool</span> <span style="color:#9cdcfe">showResult</span><span style="color:#d4d4d4"> = </span><span style="color:#569cd6">false</span><span style="color:#179fff">}</span><span style="color:#da70d6">)</span> <span style="color:#c586c0">async</span> <span style="color:#da70d6">{</span></span></div>
<div class="t mono" style="left:456px;top:473.00px;height:28.500px;line-height:28.500px;font-size:19.24px;width:1330px;"><span style="position:absolute;left:0;width:62.500px;text-align:right;color:#6e7681">122</span><span style="position:absolute;left:102px">    <span style="color:#c586c0">try</span> <span style="color:#179fff">{</span></span></div>
<div class="t mono" style="left:456px;top:501.50px;height:28.500px;line-height:28.500px;font-size:19.24px;width:1330px;"><span style="position:absolute;left:0;width:62.500px;text-align:right;color:#6e7681">123</span><span style="position:absolute;left:102px">      <span style="color:#9cdcfe">log</span><span style="color:#d4d4d4">.</span><span style="color:#d4d4d4">i</span><span style="color:#ffd700">(</span></span></div>
<div class="t mono" style="left:456px;top:530.00px;height:28.500px;line-height:28.500px;font-size:19.24px;width:1330px;"><span style="position:absolute;left:0;width:62.500px;text-align:right;color:#6e7681">124</span><span style="position:absolute;left:102px">          <span style="color:#ce9178">'|</span><span style="display:inline-block;position:relative;width:17.32px;height:0"><svg role="img" aria-label="📍" style="position:absolute;left:0;top:-19px" width="17.32" height="24" viewBox="0 0 17.32 24"><g transform="translate(8.66 0) scale(1.0)"><path d="M0 9v13" stroke="#e8e8e8" stroke-width="2.200" stroke-linecap="round"/><path d="M0 9v13" stroke="#111" stroke-width="3.600" stroke-linecap="round" opacity=".0"/><circle cx="0" cy="6.200" r="4.900" fill="#e8391f"/><circle cx="-1.400" cy="4.700" r="1.500" fill="#ff8a6a"/></g></svg></span><span style="display:inline-block;position:relative;width:17.32px;height:0"><svg role="img" aria-label="📍" style="position:absolute;left:0;top:-19px" width="17.32" height="24" viewBox="0 0 17.32 24"><g transform="translate(8.66 0) scale(1.0)"><path d="M0 9v13" stroke="#e8e8e8" stroke-width="2.200" stroke-linecap="round"/><path d="M0 9v13" stroke="#111" stroke-width="3.600" stroke-linecap="round" opacity=".0"/><circle cx="0" cy="6.200" r="4.900" fill="#e8391f"/><circle cx="-1.400" cy="4.700" r="1.500" fill="#ff8a6a"/></g></svg></span><span style="display:inline-block;position:relative;width:17.32px;height:0"><svg role="img" aria-label="📍" style="position:absolute;left:0;top:-19px" width="17.32" height="24" viewBox="0 0 17.32 24"><g transform="translate(8.66 0) scale(1.0)"><path d="M0 9v13" stroke="#e8e8e8" stroke-width="2.200" stroke-linecap="round"/><path d="M0 9v13" stroke="#111" stroke-width="3.600" stroke-linecap="round" opacity=".0"/><circle cx="0" cy="6.200" r="4.900" fill="#e8391f"/><circle cx="-1.400" cy="4.700" r="1.500" fill="#ff8a6a"/></g></svg></span><span style="color:#ce9178">|-----------------[[ POST ]] method details start -----------------|</span><span style="display:inline-block;position:relative;width:17.32px;height:0"><svg role="img" aria-label="📍" style="position:absolute;left:0;top:-19px" width="17.32" height="24" viewBox="0 0 17.32 24"><g transform="translate(8.66 0) scale(1.0)"><path d="M0 9v13" stroke="#e8e8e8" stroke-width="2.200" stroke-linecap="round"/><path d="M0 9v13" stroke="#111" stroke-width="3.600" stroke-linecap="round" opacity=".0"/><circle cx="0" cy="6.200" r="4.900" fill="#e8391f"/><circle cx="-1.400" cy="4.700" r="1.500" fill="#ff8a6a"/></g></svg></span><span style="display:inline-block;position:relative;width:17.32px;height:0"><svg role="img" aria-label="📍" style="position:absolute;left:0;top:-19px" width="17.32" height="24" viewBox="0 0 17.32 24"><g transform="translate(8.66 0) scale(1.0)"><path d="M0 9v13" stroke="#e8e8e8" stroke-width="2.200" stroke-linecap="round"/><path d="M0 9v13" stroke="#111" stroke-width="3.600" stroke-linecap="round" opacity=".0"/><circle cx="0" cy="6.200" r="4.900" fill="#e8391f"/><circle cx="-1.400" cy="4.700" r="1.500" fill="#ff8a6a"/></g></svg></span><span style="display:inline-block;position:relative;width:17.32px;height:0"><svg role="img" aria-label="📍" style="position:absolute;left:0;top:-19px" width="17.32" height="24" viewBox="0 0 17.32 24"><g transform="translate(8.66 0) scale(1.0)"><path d="M0 9v13" stroke="#e8e8e8" stroke-width="2.200" stroke-linecap="round"/><path d="M0 9v13" stroke="#111" stroke-width="3.600" stroke-linecap="round" opacity=".0"/><circle cx="0" cy="6.200" r="4.900" fill="#e8391f"/><circle cx="-1.400" cy="4.700" r="1.500" fill="#ff8a6a"/></g></svg></span><span style="color:#ce9178">|'</span><span style="color:#ffd700">)</span><span style="color:#d4d4d4">;</span></span></div>
<div class="t mono" style="left:456px;top:558.50px;height:28.500px;line-height:28.500px;font-size:19.24px;width:1330px;"><span style="position:absolute;left:0;width:62.500px;text-align:right;color:#6e7681">125</span><span style="position:absolute;left:102px"></span></div>
<div class="t mono" style="left:456px;top:587.00px;height:28.500px;line-height:28.500px;font-size:19.24px;width:1330px;"><span style="position:absolute;left:0;width:62.500px;text-align:right;color:#6e7681">126</span><span style="position:absolute;left:102px">      <span style="color:#9cdcfe">log</span><span style="color:#d4d4d4">.</span><span style="color:#d4d4d4">i</span><span style="color:#ffd700">(</span><span style="color:#9cdcfe">url</span><span style="color:#ffd700">)</span><span style="color:#d4d4d4">;</span></span></div>
</div></div>
<div class="box" style="left:456px;top:138px;width:1324px;height:57px;background:#1f1f1f"></div>
<div class="box" style="left:456px;top:195px;width:1324px;height:4px;background:linear-gradient(rgba(0,0,0,.62),rgba(0,0,0,.25) 45%,rgba(0,0,0,0))"></div>
<div class="t mono" style="left:456px;top:140.00px;height:28.500px;line-height:28.500px;font-size:19.24px;width:1330px;"><span style="position:absolute;left:0;width:62.500px;text-align:right;color:#9a9a9a">32</span><span style="position:absolute;left:102px"><span style="color:#569cd6">class</span> <span style="color:#4ec9b0">ApiMethod</span> <span style="color:#ffd700">{</span></span></div>
<div class="t mono" style="left:456px;top:169.00px;height:28.500px;line-height:28.500px;font-size:19.24px;width:1330px;"><span style="position:absolute;left:0;width:62.500px;text-align:right;color:#9a9a9a">38</span><span style="position:absolute;left:102px">  <span style="color:#4ec9b0">Future</span><span style="color:#d4d4d4">&lt;</span><span style="color:#4ec9b0">Map</span><span style="color:#d4d4d4">&lt;</span><span style="color:#4ec9b0">String</span><span style="color:#d4d4d4">, </span><span style="color:#4ec9b0">dynamic</span><span style="color:#d4d4d4">&gt;?&gt; </span><span style="color:#dcdcaa">get</span><span style="color:#da70d6">(</span></span></div>
<div class="box" style="left:1788px;top:138px;width:111px;height:468px;overflow:hidden"><pre class="mono" style="position:absolute;left:1.5px;top:-1.2px;margin:0;font-size:12px;line-height:12px;color:#d4d4d4;transform-origin:0 0;transform:scale(0.1389,0.16667);opacity:.62;filter:saturate(.75);font-weight:700;-webkit-text-stroke:2.2px">        <span style="color:#9cdcfe">log</span>.<span style="color:#dcdcaa">e</span>(<span style="color:#ce9178">'%%% Error Alert On Status Code %%%'</span>);

        <span style="color:#9cdcfe">log</span>.<span style="color:#dcdcaa">e</span>(
            <span style="color:#ce9178">'unknown error hitted in status code ${jsonDecode(response.body)}'</span>);

        <span style="color:#4ec9b0">ErrorResponse </span><span style="color:#9cdcfe">res </span>= <span style="color:#4ec9b0">ErrorResponse</span>.<span style="color:#dcdcaa">fromJson</span>(<span style="color:#dcdcaa">jsonDecode</span>(<span style="color:#9cdcfe">response</span>.<span style="color:#9cdcfe">body</span>));

        <span style="color:#4ec9b0">CustomSnackBar</span>.<span style="color:#dcdcaa">error</span>(<span style="color:#9cdcfe">res</span>.<span style="color:#9cdcfe">message</span>.<span style="color:#9cdcfe">error</span>.<span style="color:#dcdcaa">join</span>(<span style="color:#ce9178">''</span>));

        <span style="color:#c586c0">return </span><span style="color:#569cd6">null</span>;
      }
    } <span style="color:#c586c0">on </span><span style="color:#4ec9b0">SocketException </span>{
      <span style="color:#9cdcfe">log</span>.<span style="color:#dcdcaa">e</span>(<span style="color:#ce9178">'%%% Error Alert on Socket Exception %%%'</span>);

      <span style="color:#4ec9b0">CustomSnackBar</span>.<span style="color:#dcdcaa">error</span>(<span style="color:#ce9178">'Check your Internet Connection and try again!'</span>);

      <span style="color:#c586c0">return </span><span style="color:#569cd6">null</span>;
    } <span style="color:#c586c0">on </span><span style="color:#4ec9b0">TimeoutException </span>{
      <span style="color:#9cdcfe">log</span>.<span style="color:#dcdcaa">e</span>(<span style="color:#ce9178">'%%% Error Alert Timeout Exception%%%'</span>);

      <span style="color:#9cdcfe">log</span>.<span style="color:#dcdcaa">e</span>(<span style="color:#ce9178">'Time out exception$url'</span>);

      <span style="color:#4ec9b0">CustomSnackBar</span>.<span style="color:#dcdcaa">error</span>(<span style="color:#ce9178">'Something Went Wrong! Try again'</span>);

      <span style="color:#c586c0">return </span><span style="color:#569cd6">null</span>;
    } <span style="color:#c586c0">on </span><span style="color:#9cdcfe">client</span>.<span style="color:#4ec9b0">ClientException </span><span style="color:#c586c0">catch </span>(<span style="color:#9cdcfe">err</span>, <span style="color:#9cdcfe">stackrace</span>) {
      <span style="color:#9cdcfe">log</span>.<span style="color:#dcdcaa">e</span>(<span style="color:#ce9178">'%%% Error Alert Client Exception%%%'</span>);

      <span style="color:#9cdcfe">log</span>.<span style="color:#dcdcaa">e</span>(<span style="color:#ce9178">'client exception hitted'</span>);

      <span style="color:#9cdcfe">log</span>.<span style="color:#dcdcaa">e</span>(<span style="color:#9cdcfe">err</span>.<span style="color:#dcdcaa">toString</span>());

      <span style="color:#9cdcfe">log</span>.<span style="color:#dcdcaa">e</span>(<span style="color:#9cdcfe">stackrace</span>.<span style="color:#dcdcaa">toString</span>());

      <span style="color:#c586c0">return </span><span style="color:#569cd6">null</span>;
    } <span style="color:#c586c0">catch </span>(<span style="color:#9cdcfe">e</span>) {
      <span style="color:#9cdcfe">log</span>.<span style="color:#dcdcaa">e</span>(<span style="color:#ce9178">'%%% Other Error Alert %%%'</span>);

      <span style="color:#9cdcfe">log</span>.<span style="color:#dcdcaa">e</span>(<span style="color:#ce9178">'xxx unlisted error received'</span>);

      <span style="color:#9cdcfe">log</span>.<span style="color:#dcdcaa">e</span>(<span style="color:#ce9178">"xxx $e"</span>);

      <span style="color:#c586c0">return </span><span style="color:#569cd6">null</span>;
    }
  }

  <span style="color:#6a9955">// Post Method</span>
  <span style="color:#4ec9b0">Future</span>&lt;<span style="color:#4ec9b0">Map</span>&lt;<span style="color:#4ec9b0">String</span>, <span style="color:#4ec9b0">dynamic</span>&gt;?&gt; <span style="color:#dcdcaa">post</span>(<span style="color:#4ec9b0">String </span><span style="color:#9cdcfe">url</span>, <span style="color:#4ec9b0">Map</span>&lt;<span style="color:#4ec9b0">String</span>, <span style="color:#4ec9b0">dynamic</span>&gt; <span style="color:#9cdcfe">body</span>,
      {<span style="color:#4ec9b0">int </span><span style="color:#9cdcfe">code </span>= <span style="color:#b5cea8">201</span>, <span style="color:#4ec9b0">int </span><span style="color:#9cdcfe">duration </span>= <span style="color:#b5cea8">30</span>, <span style="color:#4ec9b0">bool </span><span style="color:#9cdcfe">showResult </span>= <span style="color:#569cd6">false</span>}) <span style="color:#c586c0">async </span>{
    <span style="color:#c586c0">try </span>{
      <span style="color:#9cdcfe">log</span>.<span style="color:#dcdcaa">i</span>(
          <span style="color:#ce9178">'|***|-----------------[[ POST ]] method details start -----------------|***|'</span>);

      <span style="color:#9cdcfe">log</span>.<span style="color:#dcdcaa">i</span>(<span style="color:#9cdcfe">url</span>);

      <span style="color:#9cdcfe">log</span>.<span style="color:#dcdcaa">i</span>(<span style="color:#9cdcfe">body</span>);

      <span style="color:#9cdcfe">log</span>.<span style="color:#dcdcaa">i</span>(
          <span style="color:#ce9178">'|***|-----------------[[ POST ]] method details end ------------|***|'</span>);

      <span style="color:#569cd6">final </span><span style="color:#9cdcfe">response </span>= <span style="color:#c586c0">await </span><span style="color:#9cdcfe">client</span>
          .<span style="color:#dcdcaa">post</span>(
            <span style="color:#4ec9b0">Uri</span>.<span style="color:#dcdcaa">parse</span>(<span style="color:#9cdcfe">url</span>),
            <span style="color:#9cdcfe">body</span>: <span style="color:#dcdcaa">jsonEncode</span>(<span style="color:#9cdcfe">body</span>),
            <span style="color:#9cdcfe">headers</span>: <span style="color:#9cdcfe">isBasic </span>? <span style="color:#dcdcaa">basicHeaderInfo</span>() : <span style="color:#c586c0">await </span><span style="color:#dcdcaa">bearerHeaderInfo</span>(),
          )
          .<span style="color:#dcdcaa">timeout</span>(<span style="color:#4ec9b0">Duration</span>(<span style="color:#9cdcfe">seconds</span>: <span style="color:#9cdcfe">duration</span>));

      <span style="color:#9cdcfe">log</span>.<span style="color:#dcdcaa">i</span>(
          <span style="color:#ce9178">'|###|-----------------[[ POST ]] method response start -----------------|###|'</span>);

      <span style="color:#c586c0">if </span>(<span style="color:#9cdcfe">showResult</span>) {
        <span style="color:#9cdcfe">log</span>.<span style="color:#dcdcaa">i</span>(<span style="color:#9cdcfe">response</span>.<span style="color:#9cdcfe">body</span>.<span style="color:#dcdcaa">toString</span>());
      }

      <span style="color:#9cdcfe">log</span>.<span style="color:#dcdcaa">i</span>(<span style="color:#9cdcfe">response</span>.<span style="color:#9cdcfe">statusCode</span>);

      <span style="color:#9cdcfe">log</span>.<span style="color:#dcdcaa">i</span>(
          <span style="color:#ce9178">'|###|-----------------[[ POST ]] method response end -----------------|###|'</span>);

      <span style="color:#c586c0">if </span>(<span style="color:#9cdcfe">response</span>.<span style="color:#9cdcfe">statusCode </span>== <span style="color:#9cdcfe">code</span>) {
        <span style="color:#c586c0">return </span><span style="color:#dcdcaa">jsonDecode</span>(<span style="color:#9cdcfe">response</span>.<span style="color:#9cdcfe">body</span>);
      } <span style="color:#c586c0">else </span>{
        <span style="color:#9cdcfe">log</span>.<span style="color:#dcdcaa">e</span>(<span style="color:#ce9178">'%%% Error Alert On Status Code %%%'</span>);

        <span style="color:#9cdcfe">log</span>.<span style="color:#dcdcaa">e</span>(
            <span style="color:#ce9178">'unknown error hitted in status code ${jsonDecode(response.body)}'</span>);

        <span style="color:#4ec9b0">ErrorResponse </span><span style="color:#9cdcfe">res </span>= <span style="color:#4ec9b0">ErrorResponse</span>.<span style="color:#dcdcaa">fromJson</span>(<span style="color:#dcdcaa">jsonDecode</span>(<span style="color:#9cdcfe">response</span>.<span style="color:#9cdcfe">body</span>));

        <span style="color:#4ec9b0">CustomSnackBar</span>.<span style="color:#dcdcaa">error</span>(<span style="color:#9cdcfe">res</span>.<span style="color:#9cdcfe">message</span>.<span style="color:#9cdcfe">error</span>.<span style="color:#dcdcaa">join</span>(<span style="color:#ce9178">''</span>));

        <span style="color:#c586c0">return </span><span style="color:#569cd6">null</span>;
      }
    } <span style="color:#c586c0">on </span><span style="color:#4ec9b0">SocketException </span>{
      <span style="color:#9cdcfe">log</span>.<span style="color:#dcdcaa">e</span>(<span style="color:#ce9178">'%%% Error Alert on Socket Exception %%%'</span>);

      <span style="color:#4ec9b0">CustomSnackBar</span>.<span style="color:#dcdcaa">error</span>(<span style="color:#ce9178">'Check your Internet Connection and try again!'</span>);

      <span style="color:#c586c0">return </span><span style="color:#569cd6">null</span>;
    } <span style="color:#c586c0">on </span><span style="color:#4ec9b0">TimeoutException </span>{
      <span style="color:#9cdcfe">log</span>.<span style="color:#dcdcaa">e</span>(<span style="color:#ce9178">'%%% Error Alert Timeout Exception%%%'</span>);

      <span style="color:#9cdcfe">log</span>.<span style="color:#dcdcaa">e</span>(<span style="color:#ce9178">'Time out exception$url'</span>);

      <span style="color:#4ec9b0">CustomSnackBar</span>.<span style="color:#dcdcaa">error</span>(<span style="color:#ce9178">'Something Went Wrong! Try again'</span>);

      <span style="color:#c586c0">return </span><span style="color:#569cd6">null</span>;
    } <span style="color:#c586c0">on </span><span style="color:#9cdcfe">client</span>.<span style="color:#4ec9b0">ClientException </span><span style="color:#c586c0">catch </span>(<span style="color:#9cdcfe">err</span>, <span style="color:#9cdcfe">stackrace</span>) {
      <span style="color:#9cdcfe">log</span>.<span style="color:#dcdcaa">e</span>(<span style="color:#ce9178">'%%% Error Alert Client Exception%%%'</span>);

      <span style="color:#9cdcfe">log</span>.<span style="color:#dcdcaa">e</span>(<span style="color:#ce9178">'client exception hitted'</span>);

      <span style="color:#9cdcfe">log</span>.<span style="color:#dcdcaa">e</span>(<span style="color:#9cdcfe">err</span>.<span style="color:#dcdcaa">toString</span>());

      <span style="color:#9cdcfe">log</span>.<span style="color:#dcdcaa">e</span>(<span style="color:#9cdcfe">stackrace</span>.<span style="color:#dcdcaa">toString</span>());

      <span style="color:#c586c0">return </span><span style="color:#569cd6">null</span>;
    } <span style="color:#c586c0">catch </span>(<span style="color:#9cdcfe">e</span>) {
      <span style="color:#9cdcfe">log</span>.<span style="color:#dcdcaa">e</span>(<span style="color:#ce9178">'%%% Other Error Alert %%%'</span>);

      <span style="color:#9cdcfe">log</span>.<span style="color:#dcdcaa">e</span>(<span style="color:#ce9178">'xxx unlisted error received'</span>);

      <span style="color:#9cdcfe">log</span>.<span style="color:#dcdcaa">e</span>(<span style="color:#ce9178">"xxx $e"</span>);

      <span style="color:#c586c0">return </span><span style="color:#569cd6">null</span>;
    }
  }

  <span style="color:#6a9955">// Put Method</span>
  <span style="color:#4ec9b0">Future</span>&lt;<span style="color:#4ec9b0">Map</span>&lt;<span style="color:#4ec9b0">String</span>, <span style="color:#4ec9b0">dynamic</span>&gt;?&gt; <span style="color:#dcdcaa">put</span>(<span style="color:#4ec9b0">String </span><span style="color:#9cdcfe">url</span>, <span style="color:#4ec9b0">Map</span>&lt;<span style="color:#4ec9b0">String</span>, <span style="color:#4ec9b0">dynamic</span>&gt; <span style="color:#9cdcfe">body</span>,
      {<span style="color:#4ec9b0">int </span><span style="color:#9cdcfe">code </span>= <span style="color:#b5cea8">200</span>, <span style="color:#4ec9b0">int </span><span style="color:#9cdcfe">duration </span>= <span style="color:#b5cea8">30</span>, <span style="color:#4ec9b0">bool </span><span style="color:#9cdcfe">showResult </span>= <span style="color:#569cd6">false</span>}) <span style="color:#c586c0">async </span>{
    <span style="color:#c586c0">try </span>{
      <span style="color:#9cdcfe">log</span>.<span style="color:#dcdcaa">i</span>(
          <span style="color:#ce9178">'|***|-----------------[[ PUT ]] method details start -----------------|***|'</span>);

      <span style="color:#9cdcfe">log</span>.<span style="color:#dcdcaa">i</span>(<span style="color:#9cdcfe">url</span>);

      <span style="color:#9cdcfe">log</span>.<span style="color:#dcdcaa">i</span>(<span style="color:#9cdcfe">body</span>);

      <span style="color:#9cdcfe">log</span>.<span style="color:#dcdcaa">i</span>(
          <span style="color:#ce9178">'|***|-----------------[[ PUT ]] method details end ------------|***|'</span>);

      <span style="color:#569cd6">final </span><span style="color:#9cdcfe">response </span>= <span style="color:#c586c0">await </span><span style="color:#9cdcfe">client</span>
          .<span style="color:#dcdcaa">put</span>(
            <span style="color:#4ec9b0">Uri</span>.<span style="color:#dcdcaa">parse</span>(<span style="color:#9cdcfe">url</span>),
            <span style="color:#9cdcfe">body</span>: <span style="color:#dcdcaa">jsonEncode</span>(<span style="color:#9cdcfe">body</span>),
            <span style="color:#9cdcfe">headers</span>: <span style="color:#9cdcfe">isBasic </span>? <span style="color:#dcdcaa">basicHeaderInfo</span>() : <span style="color:#c586c0">await </span><span style="color:#dcdcaa">bearerHeaderInfo</span>(),
          )
          .<span style="color:#dcdcaa">timeout</span>(<span style="color:#4ec9b0">Duration</span>(<span style="color:#9cdcfe">seconds</span>: <span style="color:#9cdcfe">duration</span>));

      <span style="color:#9cdcfe">log</span>.<span style="color:#dcdcaa">i</span>(
          <span style="color:#ce9178">'|###|-----------------[[ PUT ]] method response start -----------------|###|'</span>);

      <span style="color:#c586c0">if </span>(<span style="color:#9cdcfe">showResult</span>) {
        <span style="color:#9cdcfe">log</span>.<span style="color:#dcdcaa">i</span>(<span style="color:#9cdcfe">response</span>.<span style="color:#9cdcfe">body</span>.<span style="color:#dcdcaa">toString</span>());
      }

      <span style="color:#9cdcfe">log</span>.<span style="color:#dcdcaa">i</span>(<span style="color:#9cdcfe">response</span>.<span style="color:#9cdcfe">statusCode</span>);

      <span style="color:#9cdcfe">log</span>.<span style="color:#dcdcaa">i</span>(
          <span style="color:#ce9178">'|###|-----------------[[ PUT ]] method response end -----------------|###|'</span>);

      <span style="color:#c586c0">if </span>(<span style="color:#9cdcfe">response</span>.<span style="color:#9cdcfe">statusCode </span>== <span style="color:#9cdcfe">code</span>) {
        <span style="color:#c586c0">return </span><span style="color:#dcdcaa">jsonDecode</span>(<span style="color:#9cdcfe">response</span>.<span style="color:#9cdcfe">body</span>);
      } <span style="color:#c586c0">else </span>{
        <span style="color:#9cdcfe">log</span>.<span style="color:#dcdcaa">e</span>(<span style="color:#ce9178">'%%% Error Alert On Status Code %%%'</span>);

        <span style="color:#9cdcfe">log</span>.<span style="color:#dcdcaa">e</span>(
            <span style="color:#ce9178">'unknown error hitted in status code ${jsonDecode(response.body)}'</span>);

        <span style="color:#4ec9b0">ErrorResponse </span><span style="color:#9cdcfe">res </span>= <span style="color:#4ec9b0">ErrorResponse</span>.<span style="color:#dcdcaa">fromJson</span>(<span style="color:#dcdcaa">jsonDecode</span>(<span style="color:#9cdcfe">response</span>.<span style="color:#9cdcfe">body</span>));

        <span style="color:#4ec9b0">CustomSnackBar</span>.<span style="color:#dcdcaa">error</span>(<span style="color:#9cdcfe">res</span>.<span style="color:#9cdcfe">message</span>.<span style="color:#9cdcfe">error</span>.<span style="color:#dcdcaa">join</span>(<span style="color:#ce9178">''</span>));

        <span style="color:#c586c0">return </span><span style="color:#569cd6">null</span>;
      }
    } <span style="color:#c586c0">on </span><span style="color:#4ec9b0">SocketException </span>{
      <span style="color:#9cdcfe">log</span>.<span style="color:#dcdcaa">e</span>(<span style="color:#ce9178">'%%% Error Alert on Socket Exception %%%'</span>);

      <span style="color:#4ec9b0">CustomSnackBar</span>.<span style="color:#dcdcaa">error</span>(<span style="color:#ce9178">'Check your Internet Connection and try again!'</span>);

      <span style="color:#c586c0">return </span><span style="color:#569cd6">null</span>;
    } <span style="color:#c586c0">on </span><span style="color:#4ec9b0">TimeoutException </span>{
      <span style="color:#9cdcfe">log</span>.<span style="color:#dcdcaa">e</span>(<span style="color:#ce9178">'%%% Error Alert Timeout Exception%%%'</span>);

      <span style="color:#9cdcfe">log</span>.<span style="color:#dcdcaa">e</span>(<span style="color:#ce9178">'Time out exception$url'</span>);

      <span style="color:#4ec9b0">CustomSnackBar</span>.<span style="color:#dcdcaa">error</span>(<span style="color:#ce9178">'Something Went Wrong! Try again'</span>);

      <span style="color:#c586c0">return </span><span style="color:#569cd6">null</span>;
    } <span style="color:#c586c0">on </span><span style="color:#9cdcfe">client</span>.<span style="color:#4ec9b0">ClientException </span><span style="color:#c586c0">catch </span>(<span style="color:#9cdcfe">err</span>, <span style="color:#9cdcfe">stackrace</span>) {
      <span style="color:#9cdcfe">log</span>.<span style="color:#dcdcaa">e</span>(<span style="color:#ce9178">'%%% Error Alert Client Exception%%%'</span>);

      <span style="color:#9cdcfe">log</span>.<span style="color:#dcdcaa">e</span>(<span style="color:#ce9178">'client exception hitted'</span>);

      <span style="color:#9cdcfe">log</span>.<span style="color:#dcdcaa">e</span>(<span style="color:#9cdcfe">err</span>.<span style="color:#dcdcaa">toString</span>());

      <span style="color:#9cdcfe">log</span>.<span style="color:#dcdcaa">e</span>(<span style="color:#9cdcfe">stackrace</span>.<span style="color:#dcdcaa">toString</span>());

      <span style="color:#c586c0">return </span><span style="color:#569cd6">null</span>;
    } <span style="color:#c586c0">catch </span>(<span style="color:#9cdcfe">e</span>) {
      <span style="color:#9cdcfe">log</span>.<span style="color:#dcdcaa">e</span>(<span style="color:#ce9178">'%%% Other Error Alert %%%'</span>);

      <span style="color:#9cdcfe">log</span>.<span style="color:#dcdcaa">e</span>(<span style="color:#ce9178">'xxx unlisted error received'</span>);

      <span style="color:#9cdcfe">log</span>.<span style="color:#dcdcaa">e</span>(<span style="color:#ce9178">"xxx $e"</span>);

      <span style="color:#c586c0">return </span><span style="color:#569cd6">null</span>;
    }
  }

  <span style="color:#6a9955">// Delete Method</span>
  <span style="color:#4ec9b0">Future</span>&lt;<span style="color:#4ec9b0">Map</span>&lt;<span style="color:#4ec9b0">String</span>, <span style="color:#4ec9b0">dynamic</span>&gt;?&gt; <span style="color:#dcdcaa">delete</span>(<span style="color:#4ec9b0">String </span><span style="color:#9cdcfe">url</span>,
      {<span style="color:#4ec9b0">int </span><span style="color:#9cdcfe">code </span>= <span style="color:#b5cea8">200</span>, <span style="color:#4ec9b0">int </span><span style="color:#9cdcfe">duration </span>= <span style="color:#b5cea8">30</span>, <span style="color:#4ec9b0">bool </span><span style="color:#9cdcfe">showResult </span>= <span style="color:#569cd6">false</span>}) <span style="color:#c586c0">async </span>{
    <span style="color:#c586c0">try </span>{
      <span style="color:#9cdcfe">log</span>.<span style="color:#dcdcaa">i</span>(
          <span style="color:#ce9178">'|***|-----------------[[ DELETE ]] method details start -----------------|***|'</span>);

      <span style="color:#9cdcfe">log</span>.<span style="color:#dcdcaa">i</span>(<span style="color:#9cdcfe">url</span>);

      <span style="color:#9cdcfe">log</span>.<span style="color:#dcdcaa">i</span>(
          <span style="color:#ce9178">'|***|-----------------[[ DELETE ]] method details end ------------|***|'</span>);

      <span style="color:#569cd6">final </span><span style="color:#9cdcfe">response </span>= <span style="color:#c586c0">await </span><span style="color:#9cdcfe">client</span>
          .<span style="color:#dcdcaa">delete</span>(
            <span style="color:#4ec9b0">Uri</span>.<span style="color:#dcdcaa">parse</span>(<span style="color:#9cdcfe">url</span>),
            <span style="color:#9cdcfe">headers</span>: <span style="color:#9cdcfe">isBasic </span>? <span style="color:#dcdcaa">basicHeaderInfo</span>() : <span style="color:#c586c0">await </span><span style="color:#dcdcaa">bearerHeaderInfo</span>(),
          )
          .<span style="color:#dcdcaa">timeout</span>(<span style="color:#4ec9b0">Duration</span>(<span style="color:#9cdcfe">seconds</span>: <span style="color:#9cdcfe">duration</span>));

      <span style="color:#9cdcfe">log</span>.<span style="color:#dcdcaa">i</span>(
          <span style="color:#ce9178">'|###|-----------------[[ DELETE ]] method response start -----------------|###|'</span>);

      <span style="color:#c586c0">if </span>(<span style="color:#9cdcfe">showResult</span>) {
        <span style="color:#9cdcfe">log</span>.<span style="color:#dcdcaa">i</span>(<span style="color:#9cdcfe">response</span>.<span style="color:#9cdcfe">body</span>.<span style="color:#dcdcaa">toString</span>());</pre></div>
<div class="box" style="left:1899px;top:138px;width:21px;height:468px;border-left:1px solid #2b2b2b;border-top:1px solid #2b2b2b"></div>
<div class="box" style="left:1900px;top:232px;width:20px;height:3px;background:#9a9a9a"></div>
<div class="box" style="left:1906px;top:226px;width:8px;height:11px;background:#a8a8a8"></div>
<div class="box" style="left:456px;top:606px;width:1464px;height:382px;background:#181818;border-top:1px solid #2b2b2b"></div>
<div class="t " style="left:485.5px;top:621.0px;line-height:26px;font-size:16.5px;color:#9d9d9d;transform-origin:0 50%;transform:scaleX(0.8888);">PROBLEMS</div>
<div class="t " style="left:601.5px;top:621.0px;line-height:26px;font-size:16.5px;color:#9d9d9d;transform-origin:0 50%;transform:scaleX(0.9362);">OUTPUT</div>
<div class="t " style="left:700.0px;top:621.0px;line-height:26px;font-size:16.5px;color:#9d9d9d;transform-origin:0 50%;transform:scaleX(0.8996);">DEBUG CONSOLE</div>
<div class="t " style="left:864.5px;top:621.0px;line-height:26px;font-size:16.5px;color:#e7e7e7;transform-origin:0 50%;transform:scaleX(0.9349);">TERMINAL</div>
<div class="t " style="left:977.5px;top:621.0px;line-height:26px;font-size:16.5px;color:#9d9d9d;transform-origin:0 50%;transform:scaleX(0.8578);">PORTS</div>
<div class="box" style="left:862px;top:649.3px;width:82px;height:1.2px;background:#0078d4"></div>
<svg class="i" style="left:1738px;top:623px" width="20" height="20" viewBox="0 0 20 20" fill="none" stroke="#cccccc" stroke-width="1.600"><path d="M10 0.500v19M0.500 10h19"/></svg>
<svg class="i" style="left:1763px;top:623px" width="20" height="20" viewBox="-10 -10 20 20" fill="none" stroke="#cccccc" stroke-width="1.5"><path d="M-5.5249999999999995 -2.56L0 3.56L5.5249999999999995 -2.56"/></svg>
<svg class="i" style="left:1797.500px;top:630px" width="20" height="6"><circle cx="2.300" cy="3" r="1.600" fill="#ccc"/><circle cx="10" cy="3" r="1.600" fill="#ccc"/><circle cx="17.700" cy="3" r="1.600" fill="#ccc"/></svg>
<svg class="i" style="left:1837px;top:623px" width="20" height="20" viewBox="-10 -10 20 20" fill="none" stroke="#cccccc" stroke-width="1.600"><path d="M-7.500 4 0 -3.500 7.500 4"/></svg>
<svg class="i" style="left:1878px;top:626px" width="15" height="15" viewBox="0 0 15 15" fill="none" stroke="#cccccc" stroke-width="1.700"><path d="M1 1l13 13M14 1 1 14"/></svg>
<div class="box" style="left:1740px;top:660px;width:1px;height:328px;background:#2b2b2b"></div>
<div class="box" style="left:1741px;top:791px;width:179px;height:33px;background:#37373d;border-left:2px solid #0078d4"></div>
<svg class="i" style="left:1756px;top:664.5px" width="24" height="23" viewBox="0 0 24 23" fill="none" stroke="#cccccc" stroke-width="1.500" stroke-linejoin="round"><path d="M4.800 1.500h17.500l-3 20H1.800z"/><path d="M7 7l5.500 3.700-6.500 3.800M12.500 15.500h5" stroke-width="1.600"/></svg>
<div class="t " style="left:1785.5px;top:660.5px;line-height:31px;font-size:19.5px;color:#cccccc;letter-spacing:0.028px;">powershell</div>
<svg class="i" style="left:1756px;top:697.5px" width="24" height="23" viewBox="0 0 24 23" fill="none" stroke="#cccccc" stroke-width="1.500" stroke-linejoin="round"><path d="M4.800 1.500h17.500l-3 20H1.800z"/><path d="M7 7l5.500 3.700-6.500 3.800M12.500 15.500h5" stroke-width="1.600"/></svg>
<div class="t " style="left:1785.5px;top:693.5px;line-height:31px;font-size:19.5px;color:#cccccc;letter-spacing:0.028px;">powershell</div>
<svg class="i" style="left:1756px;top:730.5px" width="24" height="23" viewBox="0 0 24 23" fill="none" stroke="#cccccc" stroke-width="1.500" stroke-linejoin="round"><path d="M4.800 1.500h17.500l-3 20H1.800z"/><path d="M7 7l5.500 3.700-6.500 3.800M12.500 15.500h5" stroke-width="1.600"/></svg>
<div class="t " style="left:1785.5px;top:726.5px;line-height:31px;font-size:19.5px;color:#cccccc;letter-spacing:0.028px;">powershell</div>
<svg class="i" style="left:1756px;top:763.5px" width="24" height="23" viewBox="0 0 24 23" fill="none" stroke="#cccccc" stroke-width="1.500" stroke-linejoin="round"><path d="M4.800 1.500h17.500l-3 20H1.800z"/><path d="M7 7l5.500 3.700-6.500 3.800M12.500 15.500h5" stroke-width="1.600"/></svg>
<div class="t " style="left:1785.5px;top:759.5px;line-height:31px;font-size:19.5px;color:#cccccc;letter-spacing:0.028px;">powershell</div>
<svg class="i" style="left:1756px;top:796.5px" width="24" height="23" viewBox="0 0 24 23" fill="none" stroke="#cccccc" stroke-width="1.500" stroke-linejoin="round"><path d="M4.800 1.500h17.500l-3 20H1.800z"/><path d="M7 7l5.500 3.700-6.500 3.800M12.500 15.500h5" stroke-width="1.600"/></svg>
<div class="t " style="left:1785.5px;top:792.5px;line-height:31px;font-size:19.5px;color:#cccccc;letter-spacing:0.600px;">dart</div>
<div class="box" style="left:1725px;top:934px;width:15px;height:30px;background:#434343"></div>
<div class="t mono" style="left:486px;top:675.5px;height:26px;line-height:26px;font-size:18.33px;color:#3b8eea"><span style="color:#cccccc">I/flutter (22273): </span><span style="display:inline-block;position:relative;width:22px;height:0"><svg role="img" aria-label="💡" style="position:absolute;left:0;top:-19px" width="22" height="24" viewBox="0 0 22 24"><g transform="translate(10.1 0) scale(.9 1)"><path d="M0 2.200c4.300 0 7.600 3.200 7.600 7.200 0 2.700-1.500 4.300-2.700 5.700-.7.900-1 1.600-1 2.600h-7.800c0-1-.3-1.700-1-2.600-1.200-1.400-2.700-3-2.700-5.700 0-4 3.300-7.200 7.600-7.200z" fill="#ffd262"/><path d="M-2.800 6.500c1-1.500 3-2 4.500-1.500" stroke="#fff3c4" stroke-width="1.400" fill="none" stroke-linecap="round"/><path d="M-1.200 17.500v-5l1.200 1.200 1.200-1.200v5" stroke="#c98b1a" stroke-width="1" fill="none"/><rect x="-3.600" y="17.800" width="7.200" height="4" rx="1" fill="#9aa0a6"/><path d="M-3.600 19.800h7.200" stroke="#6d7378" stroke-width=".8"/></g></svg></span> ApiMethod : https://www.lcbbr.com/api/v1/login</div>
<div class="t mono" style="left:486px;top:701.5px;height:26px;line-height:26px;font-size:18.33px;color:#3b8eea"><span style="color:#cccccc">I/flutter (22273): </span><span style="display:inline-block;position:relative;width:22px;height:0"><svg role="img" aria-label="💡" style="position:absolute;left:0;top:-19px" width="22" height="24" viewBox="0 0 22 24"><g transform="translate(10.1 0) scale(.9 1)"><path d="M0 2.200c4.300 0 7.600 3.200 7.600 7.200 0 2.700-1.500 4.300-2.700 5.700-.7.900-1 1.600-1 2.600h-7.800c0-1-.3-1.700-1-2.600-1.200-1.400-2.700-3-2.700-5.700 0-4 3.300-7.200 7.600-7.200z" fill="#ffd262"/><path d="M-2.800 6.500c1-1.500 3-2 4.500-1.500" stroke="#fff3c4" stroke-width="1.400" fill="none" stroke-linecap="round"/><path d="M-1.200 17.500v-5l1.200 1.200 1.200-1.200v5" stroke="#c98b1a" stroke-width="1" fill="none"/><rect x="-3.600" y="17.800" width="7.200" height="4" rx="1" fill="#9aa0a6"/><path d="M-3.600 19.800h7.200" stroke="#6d7378" stroke-width=".8"/></g></svg></span> ApiMethod : {email: pinkeysharma@gmail.com, password: 123456789}</div>
<div class="t mono" style="left:486px;top:727.5px;height:26px;line-height:26px;font-size:18.33px;color:#3b8eea"><span style="color:#cccccc">I/flutter (22273): </span><span style="display:inline-block;position:relative;width:22px;height:0"><svg role="img" aria-label="💡" style="position:absolute;left:0;top:-19px" width="22" height="24" viewBox="0 0 22 24"><g transform="translate(10.1 0) scale(.9 1)"><path d="M0 2.200c4.300 0 7.600 3.200 7.600 7.200 0 2.700-1.500 4.300-2.700 5.700-.7.900-1 1.600-1 2.600h-7.800c0-1-.3-1.700-1-2.600-1.200-1.400-2.700-3-2.700-5.700 0-4 3.300-7.200 7.600-7.200z" fill="#ffd262"/><path d="M-2.800 6.500c1-1.500 3-2 4.500-1.500" stroke="#fff3c4" stroke-width="1.400" fill="none" stroke-linecap="round"/><path d="M-1.200 17.500v-5l1.200 1.200 1.200-1.200v5" stroke="#c98b1a" stroke-width="1" fill="none"/><rect x="-3.600" y="17.800" width="7.200" height="4" rx="1" fill="#9aa0a6"/><path d="M-3.600 19.800h7.200" stroke="#6d7378" stroke-width=".8"/></g></svg></span> ApiMethod : |<span style="display:inline-block;position:relative;width:22px;height:0"><svg role="img" aria-label="📍" style="position:absolute;left:0;top:-19px" width="22" height="24" viewBox="0 0 22 24"><g transform="translate(8.700 0)"><path d="M0 9v12.500" stroke="#e8e8e8" stroke-width="2.100" stroke-linecap="round"/><circle cx="0" cy="6.500" r="4.800" fill="#e8391f"/><circle cx="-1.400" cy="5" r="1.400" fill="#ff8a6a"/></g></svg></span><span style="display:inline-block;position:relative;width:22px;height:0"><svg role="img" aria-label="📍" style="position:absolute;left:0;top:-19px" width="22" height="24" viewBox="0 0 22 24"><g transform="translate(8.700 0)"><path d="M0 9v12.500" stroke="#e8e8e8" stroke-width="2.100" stroke-linecap="round"/><circle cx="0" cy="6.500" r="4.800" fill="#e8391f"/><circle cx="-1.400" cy="5" r="1.400" fill="#ff8a6a"/></g></svg></span><span style="display:inline-block;position:relative;width:22px;height:0"><svg role="img" aria-label="📍" style="position:absolute;left:0;top:-19px" width="22" height="24" viewBox="0 0 22 24"><g transform="translate(8.700 0)"><path d="M0 9v12.500" stroke="#e8e8e8" stroke-width="2.100" stroke-linecap="round"/><circle cx="0" cy="6.500" r="4.800" fill="#e8391f"/><circle cx="-1.400" cy="5" r="1.400" fill="#ff8a6a"/></g></svg></span>|-----------------[[ POST ]] method details end ------------|<span style="display:inline-block;position:relative;width:22px;height:0"><svg role="img" aria-label="📍" style="position:absolute;left:0;top:-19px" width="22" height="24" viewBox="0 0 22 24"><g transform="translate(8.700 0)"><path d="M0 9v12.500" stroke="#e8e8e8" stroke-width="2.100" stroke-linecap="round"/><circle cx="0" cy="6.500" r="4.800" fill="#e8391f"/><circle cx="-1.400" cy="5" r="1.400" fill="#ff8a6a"/></g></svg></span><span style="display:inline-block;position:relative;width:11px;height:0"><svg style="position:absolute;left:0;top:-19px" width="11" height="24" viewBox="0 0 11 24"><path d="M11 2.800 0.300 12.500 11 22.200v-6l-2.200-3.700 2.200-3.700z" fill="#3b8eea"/></svg></span></div>
<div class="t mono" style="left:486px;top:753.5px;height:26px;line-height:26px;font-size:18.33px;color:#3b8eea"><span style="display:inline-block;position:relative;width:22px;height:0"><svg role="img" aria-label="📍" style="position:absolute;left:0;top:-19px" width="22" height="24" viewBox="0 0 22 24"><g transform="translate(8.700 0)"><path d="M0 9v12.500" stroke="#e8e8e8" stroke-width="2.100" stroke-linecap="round"/><circle cx="0" cy="6.500" r="4.800" fill="#e8391f"/><circle cx="-1.400" cy="5" r="1.400" fill="#ff8a6a"/></g></svg></span>||</div>
<div class="t mono" style="left:486px;top:779.5px;height:26px;line-height:26px;font-size:18.33px;color:#3b8eea"><span style="color:#cccccc">I/flutter (22273): </span><span style="display:inline-block;position:relative;width:22px;height:0"><svg role="img" aria-label="💡" style="position:absolute;left:0;top:-19px" width="22" height="24" viewBox="0 0 22 24"><g transform="translate(10.1 0) scale(.9 1)"><path d="M0 2.200c4.300 0 7.600 3.200 7.600 7.200 0 2.700-1.500 4.300-2.700 5.700-.7.900-1 1.600-1 2.600h-7.800c0-1-.3-1.700-1-2.600-1.200-1.400-2.700-3-2.700-5.700 0-4 3.300-7.200 7.600-7.200z" fill="#ffd262"/><path d="M-2.800 6.500c1-1.500 3-2 4.500-1.500" stroke="#fff3c4" stroke-width="1.400" fill="none" stroke-linecap="round"/><path d="M-1.200 17.500v-5l1.200 1.200 1.200-1.200v5" stroke="#c98b1a" stroke-width="1" fill="none"/><rect x="-3.600" y="17.800" width="7.200" height="4" rx="1" fill="#9aa0a6"/><path d="M-3.600 19.800h7.200" stroke="#6d7378" stroke-width=".8"/></g></svg></span> ApiMethod : |<span style="display:inline-block;position:relative;width:22px;height:0"><svg role="img" aria-label="📒" style="position:absolute;left:0;top:-19px" width="22" height="24" viewBox="0 0 22 24"><rect x="4" y="2.500" width="16.8" height="20" rx="2" fill="#fdb713"/><rect x="4" y="2.500" width="4.200" height="20" rx="1.500" fill="#e0940a"/><path d="M4.300 6h3.200M4.300 9.500h3.200M4.300 13h3.200M4.300 16.500h3.200M4.300 20h3.200" stroke="#7a5200" stroke-width=".9"/><path d="M19.500 4.500v16" stroke="#ffd04a" stroke-width="1.200"/></svg></span><span style="display:inline-block;position:relative;width:22px;height:0"><svg role="img" aria-label="📒" style="position:absolute;left:0;top:-19px" width="22" height="24" viewBox="0 0 22 24"><rect x="4" y="2.500" width="16.8" height="20" rx="2" fill="#fdb713"/><rect x="4" y="2.500" width="4.200" height="20" rx="1.500" fill="#e0940a"/><path d="M4.300 6h3.200M4.300 9.500h3.200M4.300 13h3.200M4.300 16.500h3.200M4.300 20h3.200" stroke="#7a5200" stroke-width=".9"/><path d="M19.500 4.500v16" stroke="#ffd04a" stroke-width="1.200"/></svg></span><span style="display:inline-block;position:relative;width:22px;height:0"><svg role="img" aria-label="📒" style="position:absolute;left:0;top:-19px" width="22" height="24" viewBox="0 0 22 24"><rect x="4" y="2.500" width="16.8" height="20" rx="2" fill="#fdb713"/><rect x="4" y="2.500" width="4.200" height="20" rx="1.500" fill="#e0940a"/><path d="M4.300 6h3.200M4.300 9.500h3.200M4.300 13h3.200M4.300 16.500h3.200M4.300 20h3.200" stroke="#7a5200" stroke-width=".9"/><path d="M19.500 4.500v16" stroke="#ffd04a" stroke-width="1.200"/></svg></span>|-----------------[[ POST ]] method response start -------------</div>
<div class="t mono" style="left:486px;top:805.5px;height:26px;line-height:26px;font-size:18.33px;color:#3b8eea">-----|<span style="display:inline-block;position:relative;width:22px;height:0"><svg role="img" aria-label="📒" style="position:absolute;left:0;top:-19px" width="22" height="24" viewBox="0 0 22 24"><rect x="4" y="2.500" width="16.8" height="20" rx="2" fill="#fdb713"/><rect x="4" y="2.500" width="4.200" height="20" rx="1.500" fill="#e0940a"/><path d="M4.300 6h3.200M4.300 9.500h3.200M4.300 13h3.200M4.300 16.500h3.200M4.300 20h3.200" stroke="#7a5200" stroke-width=".9"/><path d="M19.500 4.500v16" stroke="#ffd04a" stroke-width="1.200"/></svg></span><span style="display:inline-block;position:relative;width:22px;height:0"><svg role="img" aria-label="📒" style="position:absolute;left:0;top:-19px" width="22" height="24" viewBox="0 0 22 24"><rect x="4" y="2.500" width="16.8" height="20" rx="2" fill="#fdb713"/><rect x="4" y="2.500" width="4.200" height="20" rx="1.500" fill="#e0940a"/><path d="M4.300 6h3.200M4.300 9.500h3.200M4.300 13h3.200M4.300 16.500h3.200M4.300 20h3.200" stroke="#7a5200" stroke-width=".9"/><path d="M19.500 4.500v16" stroke="#ffd04a" stroke-width="1.200"/></svg></span><span style="display:inline-block;position:relative;width:22px;height:0"><svg role="img" aria-label="📒" style="position:absolute;left:0;top:-19px" width="22" height="24" viewBox="0 0 22 24"><rect x="4" y="2.500" width="16.8" height="20" rx="2" fill="#fdb713"/><rect x="4" y="2.500" width="4.200" height="20" rx="1.500" fill="#e0940a"/><path d="M4.300 6h3.200M4.300 9.500h3.200M4.300 13h3.200M4.300 16.500h3.200M4.300 20h3.200" stroke="#7a5200" stroke-width=".9"/><path d="M19.500 4.500v16" stroke="#ffd04a" stroke-width="1.200"/></svg></span>|</div>
<div class="t mono" style="left:486px;top:831.5px;height:26px;line-height:26px;font-size:18.33px;color:#3b8eea"><span style="color:#cccccc">I/flutter (22273): </span><span style="display:inline-block;position:relative;width:22px;height:0"><svg role="img" aria-label="💡" style="position:absolute;left:0;top:-19px" width="22" height="24" viewBox="0 0 22 24"><g transform="translate(10.1 0) scale(.9 1)"><path d="M0 2.200c4.300 0 7.600 3.200 7.600 7.200 0 2.700-1.500 4.300-2.700 5.700-.7.900-1 1.600-1 2.600h-7.800c0-1-.3-1.700-1-2.600-1.200-1.400-2.700-3-2.700-5.700 0-4 3.300-7.200 7.600-7.200z" fill="#ffd262"/><path d="M-2.800 6.500c1-1.500 3-2 4.500-1.500" stroke="#fff3c4" stroke-width="1.400" fill="none" stroke-linecap="round"/><path d="M-1.200 17.500v-5l1.200 1.200 1.200-1.200v5" stroke="#c98b1a" stroke-width="1" fill="none"/><rect x="-3.600" y="17.800" width="7.200" height="4" rx="1" fill="#9aa0a6"/><path d="M-3.600 19.800h7.200" stroke="#6d7378" stroke-width=".8"/></g></svg></span> ApiMethod : {</div>
<div class="t mono" style="left:486px;top:857.5px;height:26px;line-height:26px;font-size:18.33px;color:#3b8eea">I/flutter (22273):     "message": "Server Error"</div>
<div class="t mono" style="left:486px;top:883.5px;height:26px;line-height:26px;font-size:18.33px;color:#3b8eea">I/flutter (22273): }</div>
<div class="t mono" style="left:486px;top:909.5px;height:26px;line-height:26px;font-size:18.33px;color:#3b8eea"><span style="color:#cccccc">I/flutter (22273): </span><span style="display:inline-block;position:relative;width:22px;height:0"><svg role="img" aria-label="💡" style="position:absolute;left:0;top:-19px" width="22" height="24" viewBox="0 0 22 24"><g transform="translate(10.1 0) scale(.9 1)"><path d="M0 2.200c4.300 0 7.600 3.200 7.600 7.200 0 2.700-1.500 4.300-2.700 5.700-.7.900-1 1.600-1 2.600h-7.800c0-1-.3-1.700-1-2.600-1.200-1.400-2.700-3-2.700-5.700 0-4 3.300-7.200 7.600-7.200z" fill="#ffd262"/><path d="M-2.800 6.500c1-1.500 3-2 4.500-1.500" stroke="#fff3c4" stroke-width="1.400" fill="none" stroke-linecap="round"/><path d="M-1.200 17.500v-5l1.200 1.200 1.200-1.200v5" stroke="#c98b1a" stroke-width="1" fill="none"/><rect x="-3.600" y="17.800" width="7.200" height="4" rx="1" fill="#9aa0a6"/><path d="M-3.600 19.800h7.200" stroke="#6d7378" stroke-width=".8"/></g></svg></span> ApiMethod : 500</div>
<div class="t mono" style="left:486px;top:935.5px;height:26px;line-height:26px;font-size:18.33px;color:#3b8eea"><span style="color:#cccccc">I/flutter (22273): </span><span style="display:inline-block;position:relative;width:22px;height:0"><svg role="img" aria-label="💡" style="position:absolute;left:0;top:-19px" width="22" height="24" viewBox="0 0 22 24"><g transform="translate(10.1 0) scale(.9 1)"><path d="M0 2.200c4.300 0 7.600 3.200 7.600 7.200 0 2.700-1.500 4.300-2.700 5.700-.7.900-1 1.600-1 2.600h-7.800c0-1-.3-1.700-1-2.600-1.200-1.400-2.700-3-2.700-5.700 0-4 3.300-7.200 7.600-7.200z" fill="#ffd262"/><path d="M-2.800 6.500c1-1.500 3-2 4.500-1.500" stroke="#fff3c4" stroke-width="1.400" fill="none" stroke-linecap="round"/><path d="M-1.200 17.500v-5l1.200 1.200 1.200-1.200v5" stroke="#c98b1a" stroke-width="1" fill="none"/><rect x="-3.600" y="17.800" width="7.200" height="4" rx="1" fill="#9aa0a6"/><path d="M-3.600 19.800h7.200" stroke="#6d7378" stroke-width=".8"/></g></svg></span> ApiMethod : |<span style="display:inline-block;position:relative;width:22px;height:0"><svg role="img" aria-label="📒" style="position:absolute;left:0;top:-19px" width="22" height="24" viewBox="0 0 22 24"><rect x="4" y="2.500" width="16.8" height="20" rx="2" fill="#fdb713"/><rect x="4" y="2.500" width="4.200" height="20" rx="1.500" fill="#e0940a"/><path d="M4.300 6h3.200M4.300 9.500h3.200M4.300 13h3.200M4.300 16.500h3.200M4.300 20h3.200" stroke="#7a5200" stroke-width=".9"/><path d="M19.500 4.500v16" stroke="#ffd04a" stroke-width="1.200"/></svg></span><span style="display:inline-block;position:relative;width:22px;height:0"><svg role="img" aria-label="📒" style="position:absolute;left:0;top:-19px" width="22" height="24" viewBox="0 0 22 24"><rect x="4" y="2.500" width="16.8" height="20" rx="2" fill="#fdb713"/><rect x="4" y="2.500" width="4.200" height="20" rx="1.500" fill="#e0940a"/><path d="M4.300 6h3.200M4.300 9.500h3.200M4.300 13h3.200M4.300 16.500h3.200M4.300 20h3.200" stroke="#7a5200" stroke-width=".9"/><path d="M19.500 4.500v16" stroke="#ffd04a" stroke-width="1.200"/></svg></span><span style="display:inline-block;position:relative;width:22px;height:0"><svg role="img" aria-label="📒" style="position:absolute;left:0;top:-19px" width="22" height="24" viewBox="0 0 22 24"><rect x="4" y="2.500" width="16.8" height="20" rx="2" fill="#fdb713"/><rect x="4" y="2.500" width="4.200" height="20" rx="1.500" fill="#e0940a"/><path d="M4.300 6h3.200M4.300 9.500h3.200M4.300 13h3.200M4.300 16.500h3.200M4.300 20h3.200" stroke="#7a5200" stroke-width=".9"/><path d="M19.500 4.500v16" stroke="#ffd04a" stroke-width="1.200"/></svg></span>|-----------------[[ POST ]] method response end ---------------</div>
<div class="t mono" style="left:486px;top:961.5px;height:26px;line-height:26px;font-size:18.33px;color:#3b8eea">-----|<span style="display:inline-block;position:relative;width:22px;height:0"><svg role="img" aria-label="📒" style="position:absolute;left:0;top:-19px" width="22" height="24" viewBox="0 0 22 24"><rect x="4" y="2.500" width="16.8" height="20" rx="2" fill="#fdb713"/><rect x="4" y="2.500" width="4.200" height="20" rx="1.500" fill="#e0940a"/><path d="M4.300 6h3.200M4.300 9.500h3.200M4.300 13h3.200M4.300 16.500h3.200M4.300 20h3.200" stroke="#7a5200" stroke-width=".9"/><path d="M19.500 4.500v16" stroke="#ffd04a" stroke-width="1.200"/></svg></span><span style="display:inline-block;position:relative;width:22px;height:0"><svg role="img" aria-label="📒" style="position:absolute;left:0;top:-19px" width="22" height="24" viewBox="0 0 22 24"><rect x="4" y="2.500" width="16.8" height="20" rx="2" fill="#fdb713"/><rect x="4" y="2.500" width="4.200" height="20" rx="1.500" fill="#e0940a"/><path d="M4.300 6h3.200M4.300 9.500h3.200M4.300 13h3.200M4.300 16.500h3.200M4.300 20h3.200" stroke="#7a5200" stroke-width=".9"/><path d="M19.500 4.500v16" stroke="#ffd04a" stroke-width="1.200"/></svg></span><span style="display:inline-block;position:relative;width:22px;height:0"><svg role="img" aria-label="📒" style="position:absolute;left:0;top:-19px" width="22" height="24" viewBox="0 0 22 24"><rect x="4" y="2.500" width="16.8" height="20" rx="2" fill="#fdb713"/><rect x="4" y="2.500" width="4.200" height="20" rx="1.500" fill="#e0940a"/><path d="M4.300 6h3.200M4.300 9.500h3.200M4.300 13h3.200M4.300 16.500h3.200M4.300 20h3.200" stroke="#7a5200" stroke-width=".9"/><path d="M19.500 4.500v16" stroke="#ffd04a" stroke-width="1.200"/></svg></span>|</div>
<div class="box" style="left:0;top:988px;width:1920px;height:32px;background:#181818;border-top:1px solid #2b2b2b"></div>
<div class="box" style="left:0;top:989px;width:51px;height:31px;background:#0078d4"></div>
<svg class="i" style="left:17px;top:995px" width="18" height="18" viewBox="0 0 18 18" fill="none" stroke="#ffffff" stroke-width="1.700"><path d="M2.500 7.500 8 13l-5.500 5.500" transform="translate(0 -2)"/><path d="M15.500 1 10 6.500 15.500 12" transform="translate(0 -1.500)"/></svg>
<svg class="i" style="left:64px;top:994px" width="19" height="19" viewBox="0 0 19 19" fill="none" stroke="#cccccc" stroke-width="1.500"><circle cx="9.500" cy="9.500" r="8.500"/><path d="M5.800 5.800l7.400 7.400M13.200 5.800l-7.400 7.400"/></svg>
<div class="t " style="left:88.5px;top:990.0px;line-height:29px;font-size:18px;color:#cccccc;letter-spacing:0.989px;">0</div>
<svg class="i" style="left:105px;top:994px" width="19" height="19" viewBox="0 0 19 19" fill="none" stroke="#cccccc" stroke-width="1.500" stroke-linejoin="round"><path d="M9.500 1.500 18 17.500H1z"/><path d="M9.500 7v6M9.500 14.300v1.700" stroke-width="1.700"/></svg>
<div class="t " style="left:129.0px;top:990.0px;line-height:29px;font-size:18px;color:#cccccc;letter-spacing:0.989px;">0</div>
<svg class="i" style="left:165px;top:993px" width="19" height="20" viewBox="0 0 19 20" fill="none" stroke="#cccccc" stroke-width="1.400" stroke-linecap="round"><path d="M4.200 19 9.500 7l5.300 12M6.300 14.500h6.400"/><circle cx="9.500" cy="6" r="1.200"/><path d="M5.500 2.500a5 5 0 0 0 0 7M13.500 2.500a5 5 0 0 1 0 7M2.800 .8a8 8 0 0 0 0 10.400M16.200 .8a8 8 0 0 1 0 10.400"/></svg>
<div class="t " style="left:189.0px;top:990.0px;line-height:29px;font-size:18px;color:#cccccc;letter-spacing:0.989px;">0</div>
<div class="t " style="left:1216.0px;top:990.0px;line-height:29px;font-size:18px;color:#cccccc;letter-spacing:-0.292px;">Ln 138, Col 12</div>
<div class="t " style="left:1351.5px;top:990.0px;line-height:29px;font-size:18px;color:#cccccc;letter-spacing:-0.617px;">Spaces: 2</div>
<div class="t " style="left:1449.0px;top:990.0px;line-height:29px;font-size:18px;color:#cccccc;letter-spacing:-0.399px;">UTF-8</div>
<div class="t " style="left:1521.0px;top:990.0px;line-height:29px;font-size:18px;color:#cccccc;letter-spacing:-1.253px;">LF</div>
<div class="t " style="left:1561.5px;top:989.5px;line-height:29px;font-size:18px;color:#cccccc;letter-spacing:3.238px;">{}</div>
<div class="t " style="left:1589.5px;top:990.0px;line-height:29px;font-size:18px;color:#cccccc;letter-spacing:0.249px;">Dart</div>
<div class="t " style="left:1644.5px;top:990.0px;line-height:29px;font-size:18px;color:#cccccc;letter-spacing:-0.135px;">CPH1937 (android-arm64)</div>
<svg class="i" style="left:1878px;top:993px" width="19" height="21" viewBox="0 0 19 21" fill="none" stroke="#cccccc" stroke-width="1.500" stroke-linejoin="round"><path d="M9.500 1.500c-3.600 0-6 2.700-6 6v5l-2 3.500h16l-2-3.500v-5c0-3.300-2.400-6-6-6z"/><path d="M7.300 16.500c0 1.300 1 2.200 2.200 2.200s2.200-.9 2.200-2.200"/></svg>
<div class="box" style="left:0;top:1020px;width:1920px;height:60px;background:linear-gradient(90deg,#213643 0%,#213643 60%,#1b2a48 86%,#1a2947 100%)"></div>
<div class="box" style="left:0;top:1020px;width:72px;height:60px;background:linear-gradient(90deg,#1d3442,#25414f)"></div>
<svg class="i" style="left:24px;top:1038px" width="25" height="25" viewBox="0 0 25 25" fill="#ffffff"><path d="M0 3.500 10.200 2.100v9.800H0zM11.400 1.900 24.500 0v11.900H11.400zM0 13.100h10.200v9.800L0 21.500zM11.400 13.100h13.100V25l-13.100-1.900z"/></svg>
<div class="box" style="left:72.500px;top:1020px;width:431.3px;height:59.5px;background:#f1f1f1;border:1.5px solid #d4d4d4"></div>
<svg class="i" style="left:90px;top:1038px" width="25" height="24" viewBox="0 0 25 24" fill="none" stroke="#1b1b1b" stroke-width="1.800"><circle cx="16" cy="8.500" r="7.300"/><path d="M10.800 13.700 0.800 23.300"/></svg>
<div class="t " style="left:131.5px;top:1033.5px;line-height:36px;font-size:22.4px;color:#2a2a2a;letter-spacing:0.054px;">Type here to search</div>
<svg class="i" style="left:395px;top:1018px" width="120" height="62" viewBox="0 0 120 62">
<g stroke="#7aa862" stroke-width="1.300" fill="none"><path d="M34 36 24 19M34 36 36 18M35 36 45 27M32 36 21 29"/></g>
<path d="M24.500 29.500 31 36 33.500 25.500 36 36 42 28.500 41 36H27z" fill="#5f9f62"/>
<g fill="#f2708f"><ellipse cx="20.900" cy="15" rx="6.700" ry="4.800" transform="rotate(-30 20.900 15)"/><ellipse cx="36.900" cy="13.400" rx="7.800" ry="6"/>
<ellipse cx="47.800" cy="23.100" rx="4.500" ry="7.800" transform="rotate(-8 47.800 23.100)"/><ellipse cx="17.200" cy="27.800" rx="5.400" ry="7" transform="rotate(-12 17.200 27.800)"/></g>
<g fill="#c23c62"><ellipse cx="19.800" cy="12.800" rx="2.600" ry="1.200" transform="rotate(-30 19.800 12.800)"/><ellipse cx="37" cy="10.700" rx="3" ry="1.300"/>
<ellipse cx="49.500" cy="23" rx="1.200" ry="3" transform="rotate(-8 49.500 23)"/><ellipse cx="15.200" cy="28.500" rx="1.300" ry="2.800" transform="rotate(-12 15.200 28.500)"/></g>
<path d="M24.400 35.300h20l-.5 16h.7v2.500H23.900v-2.500h.9z" fill="#e08a2e"/><path d="M24.400 35.300h20v1.300h-20z" fill="#eca04c"/><path d="M23.900 51.300h21.200v2.500H23.900z" fill="#d27c22"/>
<rect x="51.200" y="29.400" width="36.600" height="25.600" rx="1.500" fill="#5ac063"/><path d="M72 29.400h14.300c.8 0 1.500.7 1.500 1.500V53.500c0 .8-.7 1.500-1.500 1.500H72z" fill="#43a653"/>
<rect x="51.200" y="29.400" width="36.600" height="3" rx="1.200" fill="#4db257"/>
<rect x="58.700" y="29.400" width="5.700" height="25.600" fill="#f8cf2c"/><path d="M69 28 78.500 31 80 55h4L82.500 30 70 26.500z" fill="#f6c92a"/>
<ellipse cx="63.500" cy="24.600" rx="6" ry="3.400" transform="rotate(38 63.500 24.600)" fill="#f6c92a"/><ellipse cx="63" cy="24" rx="3.200" ry="1.500" transform="rotate(38 63 24)" fill="#a8801a"/>
<ellipse cx="75" cy="24.600" rx="6" ry="3.400" transform="rotate(-38 75 24.600)" fill="#f6c92a"/><ellipse cx="75.500" cy="24" rx="3.200" ry="1.500" transform="rotate(-38 75.500 24)" fill="#a8801a"/>
<circle cx="69.300" cy="28.300" r="2.400" fill="#f2c21e"/>
</svg>
<svg class="i" style="left:527px;top:1037px" width="26" height="25" viewBox="0 0 26 25" fill="none" stroke="#ffffff" stroke-width="1.500"><rect x="1" y="6.500" width="16" height="12"/><path d="M1 3.500V1h16v2.500M1 21.500V24h16v-2.500M23.500 1v23"/><rect x="22.200" y="8" width="2.600" height="3.200" fill="#fff" stroke="none"/></svg>
<svg class="i" style="left:599px;top:1031.500px" width="37" height="37" viewBox="0 0 37 37">
<defs><linearGradient id="eg1" x1="0" y1="0" x2="1" y2="1"><stop offset="0" stop-color="#35c1f1"/><stop offset=".5" stop-color="#4fd07a"/><stop offset="1" stop-color="#6ad24b"/></linearGradient>
<linearGradient id="eg2" x1="0" y1="0" x2="0" y2="1"><stop offset="0" stop-color="#1e7fd6"/><stop offset="1" stop-color="#0c59a4"/></linearGradient></defs>
<circle cx="18.500" cy="18.500" r="18" fill="url(#eg2)"/>
<path d="M1.500 14C4 5 11 .5 18.500 .5c10 0 18 7 18 15.500 0 6-4.500 9.500-9.500 9.500-4 0-6-1.800-6-3.500 0-1.500 1.500-2 1.500-4.500 0-3.500-3.500-6.500-8-6.500C8 11 3.500 13 1.500 18z" fill="url(#eg1)"/>
<path d="M1 17c2-6 8-8.500 13.500-8.500 5 0 9 3.500 9 7.500 0 1.500-.6 2.800-1.200 3.500-2-4-6-5.500-9.500-5.500-5 0-8.500 4-8.500 9 0 5 3 9.500 7.500 12C5.500 33.500 .5 26.500 .5 19z" fill="#1b6fc2" opacity=".95"/>
<path d="M12.500 21c0 7 5.500 13 14 11.500 3-.6 5.500-2 7-3.500-3 5-8.500 7.500-14 7.500C11 36.500 4.500 30 4.500 23c0-5 3.500-9 8.500-9 4 0 7.500 2.500 9 5.500-1.500-1-3-1.500-4.500-1.500-3 0-5 1.500-5 3z" fill="#1a5fb4"/>
</svg>
<svg class="i" style="left:675.500px;top:1036.500px" width="34" height="27" viewBox="0 0 34 27">
<path d="M1 2.500C1 1.500 1.800 1 2.500 1H12l3 3h16.500c.8 0 1.500.7 1.500 1.500V8H1z" fill="#e9a820"/>
<rect x="1" y="5.500" width="32" height="20.500" rx="1.500" fill="#fbd25e"/>
<path d="M7 26V17.500c0-1 .8-1.500 1.500-1.500h17c.8 0 1.500.6 1.500 1.500V26h-5v-5.500H12V26z" fill="#3c8ed8"/>
</svg>
<svg class="i" style="left:749px;top:1032.500px" width="36" height="36" viewBox="0 0 36 36">
<path d="M9.500 8V3.800C9.500 2 10.800 1.200 12.300 1.200h11.400c1.500 0 2.800.8 2.800 2.600V8" fill="none" stroke="#3aa0e6" stroke-width="2.200"/>
<path d="M.3 4.500h35.400V31c0 2.500-2 4.300-4.500 4.300H4.800C2.300 35.300 .3 33.500 .3 31z" fill="#f1f1f1"/>
<rect x="10.300" y="11.500" width="7.200" height="7.200" fill="#f25022"/><rect x="18.700" y="11.500" width="7.200" height="7.200" fill="#7fba00"/><rect x="10.300" y="19.900" width="7.200" height="7.200" fill="#00a4ef"/><rect x="18.700" y="19.900" width="7.200" height="7.200" fill="#ffb900"/>
</svg>
<svg class="i" style="left:823.500px;top:1032.500px" width="37" height="34" viewBox="0 0 37 34">
<path d="M.5 12.500 18.500 .5l18 12V14H.5z" fill="#1565b8"/>
<path d="M4 11h29v14H4z" fill="#eef4fa"/>
<path d="M.5 12.500v21h36v-21L18.500 24z" fill="#2a9ae6"/>
<path d="M.5 33.500 18.500 21.500l18 12z" fill="#1d84d4"/>
<path d="M36.500 12.500 18.500 24l18 9.500z" fill="#4db4f2" opacity=".7"/>
</svg>
<svg class="i" style="left:899.500px;top:1032.500px" width="35" height="36" viewBox="0 0 35 36">
<defs><linearGradient id="og" x1="0" y1="0" x2="0" y2="1"><stop offset="0" stop-color="#ff1b2d"/><stop offset="1" stop-color="#b80717"/></linearGradient></defs>
<ellipse cx="17.500" cy="18" rx="17.200" ry="17.500" fill="url(#og)"/>
<ellipse cx="17" cy="18" rx="7.300" ry="13.200" fill="#213643"/>
<path d="M22.500 5.500c5 2 8 7 8 12.500s-3 10.500-8 12.500c2.500-3 3.500-7.500 3.500-12.500s-1-9.500-3.500-12.500z" fill="#e3112a" opacity=".6"/>
</svg>
<svg class="i" style="left:974.500px;top:1032.500px" width="36" height="36" viewBox="0 0 36 36">
<polygon points="35.4,17.8 33.4,22.0 33.0,26.6 29.3,29.3 26.6,33.0 22.0,33.4 17.8,35.4 13.6,33.4 9.0,33.0 6.3,29.3 2.6,26.6 2.2,22.0 0.2,17.8 2.2,13.6 2.6,9.0 6.3,6.3 9.0,2.6 13.6,2.2 17.8,0.2 22.0,2.2 26.6,2.6 29.3,6.3 33.0,9.0 33.4,13.6" fill="#ffffff"/>
<path d="M17.800 9.500 10 29M17.800 9.500 25.500 29M9 18.500h17.500M11.500 24c4 2.500 8.500 2.500 12.500 0" fill="none" stroke="#4285f4" stroke-width="2.800" stroke-linecap="round"/>
<circle cx="17.800" cy="8.800" r="2.400" fill="#fff" stroke="#202124" stroke-width="1.400"/>
<path d="M22.500 15.500l4.500 1.500-3.500 3.500z" fill="#3ddc84"/>
</svg>
<div class="box" style="left:1031px;top:1020px;width:73px;height:57px;background:#4c606d"></div>
<svg class="i" style="left:1048px;top:1031.500px" width="38" height="36" viewBox="0 0 24 24" preserveAspectRatio="none">
<polygon points="0.400,8.800 3,6.600 17.700,17.600 17.700,23.700" fill="#1173c2"/>
<polygon points="17.700,0.300 17.700,6.600 3,17.400 0.400,15.300" fill="#1588d8"/>
<polygon points="17.700,0.300 24,3.100 24,20.900 17.700,23.700" fill="#25a2ee"/>
</svg>
<div class="box" style="left:1031px;top:1077px;width:73px;height:3px;background:#76b9ed"></div>
<div class="box" style="left:1112px;top:1077px;width:61px;height:3px;background:#76b9ed"></div>
<div class="box" style="left:1187.5px;top:1077px;width:61.0px;height:3px;background:#76b9ed"></div>
<svg class="i" style="left:1124px;top:1032px" width="36" height="36" viewBox="0 0 36 36">
<circle cx="18" cy="18" r="18" fill="#ff6c37"/>
<path d="M8 27.500 11 24 22.500 12.500 25 15 13 26z" fill="#fff"/><path d="M7.500 28 11.500 26.500" stroke="#fff" stroke-width="1.500"/>
<circle cx="26" cy="10.500" r="3.300" fill="#fff"/><circle cx="26.300" cy="10.200" r="1.300" fill="#ff6c37"/>
<path d="M13 20.500l3 3M15.500 18l3 3M18 15.500l3 3" stroke="#ff6c37" stroke-width=".9"/>
</svg>
<svg class="i" style="left:1199px;top:1031.500px" width="40" height="40" viewBox="0 0 40 40">
<circle cx="17.800" cy="17.800" r="17.500" fill="#e33b2e"/>
<path d="M17.800 17.800 2.600 9A17.500 17.500 0 0 0 11 34z" fill="#2da94f"/>
<path d="M17.800 17.800 11 34A17.500 17.500 0 0 0 35.300 17.800z" fill="#2da94f"/>
<path d="M17.800 17.800 33 9a17.500 17.500 0 0 1-7 24.500z" fill="#fbc116"/>
<path d="M17.800 17.800 33 9h-15z" fill="#fbc116"/>
<path d="M2.600 9A17.500 17.500 0 0 1 33 9H17.800z" fill="#e33b2e"/>
<circle cx="17.800" cy="17.800" r="8.200" fill="#fff"/><circle cx="17.800" cy="17.800" r="6.500" fill="#1a73e8"/>
<circle cx="26.500" cy="28" r="10.300" fill="#5c6bc0"/>
</svg>
<div class="t " style="left:1220.5px;top:1048.0px;line-height:23px;font-size:14.5px;color:#d6dcff;font-weight:700;">P</div>
<svg class="i" style="left:1397px;top:1030px" width="40" height="40" viewBox="0 0 40 40">
<path d="M3 4 13 30M8 2.500 16 30M13 3 19 30" stroke="#c98a2a" stroke-width="3" stroke-linecap="round"/>
<path d="M3 4 13 30M8 2.500 16 30M13 3 19 30" stroke="#e9b04d" stroke-width="1.200" stroke-linecap="round"/>
<path d="M36 2.500 32.500 10" stroke="#2a7fd0" stroke-width="3" stroke-linecap="round"/>
<path d="M33 9.500 20 37l-5-2.500L28.500 8z" fill="#e6a544"/>
<circle cx="19" cy="32" r="7" fill="#c9302c"/><path d="M14.500 27.500c3 2 5 5 6 9" stroke="#f2d8d8" stroke-width="1" fill="none"/>
</svg>
<div class="t " style="left:1446.5px;top:1034.2px;line-height:33px;font-size:20.5px;color:#ffffff;letter-spacing:-0.018px;">Result</div>
<svg class="i" style="left:1545px;top:1043px" width="22" height="12" viewBox="0 0 22 12" fill="none" stroke="#ffffff" stroke-width="1.500"><path d="M1 11 11 1.500 21 11"/></svg>
<svg class="i" style="left:1594px;top:1038px" width="24" height="24" viewBox="0 0 24 24" fill="none" stroke="#ffffff" stroke-width="1.400"><path d="M1.500 22.500a21 21 0 0 1 21-21M7 22.500a15.500 15.500 0 0 1 15.500-15.500M12.500 22.500a10 10 0 0 1 10-10"/><circle cx="19.500" cy="20.500" r="1.700" fill="#fff" stroke="none"/></svg>
<svg class="i" style="left:1640px;top:1043px" width="26" height="14" viewBox="0 0 26 14"><rect x=".800" y=".800" width="21.500" height="12.400" fill="none" stroke="#fff" stroke-width="1.400"/><rect x="2.800" y="2.800" width="9.500" height="8.400" fill="#fff"/><rect x="23" y="4.500" width="2" height="5" fill="#fff"/></svg>
<div class="t " style="left:1689.5px;top:1023.0px;line-height:29px;font-size:18px;color:#ffffff;letter-spacing:0.348px;">11:34 AM</div>
<div class="t " style="left:1691.0px;top:1051.0px;line-height:29px;font-size:18px;color:#ffffff;letter-spacing:0.617px;">5/5/2024</div>
<svg class="i" style="left:1797px;top:1038px" width="40" height="38" viewBox="0 0 40 38"><path d="M1 1h24v18H13l-6 6v-6H1z" fill="#fff"/><path d="M5 6h16M5 10h16M5 14h16" stroke="#1b2a48" stroke-width="1.200"/><circle cx="24.500" cy="24.500" r="10.800" fill="#1f2630" stroke="#6a7078" stroke-width="1.200"/></svg>
<div class="t " style="left:1815.5px;top:1049.0px;line-height:27px;font-size:17px;color:#ffffff;font-weight:700;">3</div>
<svg class="i" style="left:1853px;top:1034px" width="36" height="36" viewBox="0 0 36 36">
<defs><linearGradient id="cg1" x1="0" y1="0" x2="1" y2="1"><stop offset="0" stop-color="#2bb6f0"/><stop offset=".5" stop-color="#39c481"/><stop offset="1" stop-color="#f6c445"/></linearGradient>
<linearGradient id="cg2" x1="0" y1="0" x2="1" y2="1"><stop offset="0" stop-color="#7a5af8"/><stop offset="1" stop-color="#ef5fa7"/></linearGradient></defs>
<path d="M9 2h11c3 0 4 2 5 5l3 10H16L12 6c-1-2-2-4-3-4z" fill="url(#cg2)"/>
<path d="M3 8c1-4 3-6 7-6 3 0 4 2 5 5l4 13c1 3 2 5 5 5H8c-4 0-7-3-6-8z" fill="url(#cg1)"/>
<path d="M22 8h6c4 0 7 3 6 8l-1 4c-1 3-3 5-7 5-3 0-4-2-5-5z" fill="url(#cg2)" opacity=".9"/>
<rect x="11" y="21" width="24" height="13" rx="2.500" fill="#ffd335"/>
</svg>
<div class="t " style="left:1864.0px;top:1053.0px;line-height:17px;font-size:10.5px;color:#1a1a1a;font-weight:700;letter-spacing:-0.363px;">PRE</div>
<div class="box" style="left:1913px;top:1020px;width:1px;height:60px;background:#5a6a80"></div>
<svg class="i" style="left:0;top:0" width="1920" height="1080" viewBox="0 0 1920 1080" fill="none" stroke="#ed1c24" stroke-width="3.6" stroke-linecap="round" stroke-linejoin="round"><path d="M681.2 826.2C681.6 823.5 682.8 816.0 683.8 810.0C684.8 804.0 686.3 795.8 687.5 790.0C688.7 784.2 689.5 779.6 691.2 775.0C692.9 770.4 695.6 766.0 697.5 762.5C699.4 759.0 701.5 757.5 702.5 753.8C703.5 750.0 703.5 745.2 703.8 740.0C704.1 734.8 704.2 728.8 704.5 722.5C704.8 716.2 704.8 707.3 705.5 702.5C706.2 697.7 706.4 696.5 708.8 693.8C711.2 691.1 715.6 688.3 720.0 686.2C724.4 684.1 730.0 682.4 735.0 681.2C740.0 680.0 740.8 679.3 750.0 678.8C759.2 678.3 776.7 678.0 790.0 678.0C803.3 678.0 819.6 678.3 830.0 678.8C840.4 679.3 844.6 680.4 852.5 681.2C860.4 682.0 869.2 683.5 877.5 683.8C885.8 684.1 896.9 683.6 902.5 683.0C908.1 682.4 907.0 681.3 911.2 680.0C915.4 678.7 921.5 676.6 927.5 675.0C933.5 673.4 937.1 672.0 947.5 670.5C957.9 669.0 974.6 667.2 990.0 666.2C1005.4 665.2 1023.3 664.9 1040.0 664.5C1056.7 664.1 1076.2 663.7 1090.0 663.8C1103.8 663.9 1110.8 664.0 1122.5 665.0C1134.2 666.0 1148.8 667.9 1160.0 670.0C1171.2 672.1 1180.8 675.2 1190.0 677.5C1199.2 679.8 1207.5 682.4 1215.0 683.8C1222.5 685.2 1227.5 685.5 1235.0 685.8C1242.5 686.1 1254.6 686.0 1260.0 685.5C1265.4 685.0 1261.2 683.6 1267.5 682.5C1273.8 681.4 1286.2 680.2 1297.5 678.8C1308.8 677.3 1322.5 675.3 1335.0 673.8C1347.5 672.3 1360.0 671.5 1372.5 670.0C1385.0 668.5 1399.6 666.5 1410.0 665.0C1420.4 663.5 1426.7 662.9 1435.0 661.2C1443.3 659.5 1451.7 656.7 1460.0 655.0C1468.3 653.3 1477.3 652.1 1485.0 651.2C1492.7 650.3 1502.7 649.8 1506.2 649.5 M1506.2 649.5C1506.2 654.2 1506.2 667.0 1506.2 677.5C1506.2 688.0 1505.6 703.8 1506.2 712.5C1506.8 721.2 1509.0 723.3 1510.0 730.0C1511.0 736.7 1511.5 745.0 1512.0 752.5C1512.5 760.0 1512.8 767.5 1513.0 775.0C1513.2 782.5 1513.0 793.8 1513.0 797.5 M1513.0 797.5C1510.8 798.1 1504.7 799.5 1500.0 801.2C1495.3 802.9 1491.7 805.0 1485.0 807.5C1478.3 810.0 1468.3 813.3 1460.0 816.2C1451.7 819.1 1443.3 822.1 1435.0 825.0C1426.7 827.9 1418.3 831.3 1410.0 833.8C1401.7 836.3 1393.3 837.9 1385.0 840.0C1376.7 842.1 1368.3 844.1 1360.0 846.2C1351.7 848.3 1343.3 850.2 1335.0 852.5C1326.7 854.8 1318.3 857.1 1310.0 860.0C1301.7 862.9 1292.1 866.7 1285.0 870.0C1277.9 873.3 1273.3 877.1 1267.5 880.0C1261.7 882.9 1255.4 885.6 1250.0 887.5C1244.6 889.4 1241.7 890.2 1235.0 891.2C1228.3 892.2 1219.6 893.4 1210.0 893.8C1200.4 894.2 1185.0 894.8 1177.5 893.8C1170.0 892.8 1169.2 889.8 1165.0 887.5C1160.8 885.2 1156.7 882.3 1152.5 880.0C1148.3 877.7 1145.0 875.7 1140.0 873.8C1135.0 871.9 1129.6 870.1 1122.5 868.8C1115.4 867.5 1105.2 866.6 1097.5 866.2C1089.8 865.8 1079.8 866.2 1076.2 866.2 M681.2 826.2C699.3 826.2 755.2 826.2 790.0 826.2C824.8 826.2 865.0 826.1 890.0 826.2C915.0 826.3 925.4 826.6 940.0 827.0C954.6 827.4 965.8 828.5 977.5 828.8C989.2 829.1 1002.5 829.3 1010.0 828.8C1017.5 828.2 1015.4 826.1 1022.5 825.5C1029.6 824.9 1042.9 825.2 1052.5 825.0C1062.1 824.8 1075.4 824.6 1080.0 824.5 M1080.0 824.5C1079.4 827.1 1077.2 833.2 1076.2 840.0C1075.2 846.8 1074.4 857.5 1073.8 865.0C1073.2 872.5 1072.5 879.4 1072.5 885.0C1072.5 890.6 1073.6 896.5 1073.8 898.8 M1073.8 898.8C1070.2 898.9 1059.8 899.2 1052.5 899.5C1045.2 899.8 1034.6 899.4 1030.0 900.5C1025.4 901.6 1027.1 903.2 1025.0 906.2C1022.9 909.2 1019.6 915.2 1017.5 918.8C1015.4 922.3 1015.4 925.0 1012.5 927.5C1009.6 930.0 1005.8 932.1 1000.0 933.8C994.2 935.5 987.5 936.5 977.5 937.5C967.5 938.5 950.4 938.7 940.0 939.5C929.6 940.3 923.3 941.0 915.0 942.5C906.7 944.0 898.3 946.5 890.0 948.8C881.7 951.1 873.3 953.9 865.0 956.2C856.7 958.5 848.3 960.6 840.0 962.5C831.7 964.4 823.3 966.3 815.0 967.5C806.7 968.7 800.4 969.3 790.0 969.5C779.6 969.7 761.7 969.5 752.5 968.8C743.3 968.0 741.2 966.7 735.0 965.0C728.8 963.3 719.8 961.3 715.0 958.8C710.2 956.3 708.9 953.5 706.2 950.0C703.5 946.5 701.3 940.8 698.8 937.5C696.3 934.2 694.3 932.1 691.2 930.0C688.1 927.9 683.1 927.3 680.0 925.0C676.9 922.7 674.8 919.5 672.5 916.2C670.2 912.9 667.5 908.5 666.2 905.0C665.0 901.5 664.6 899.2 665.0 895.0C665.4 890.8 667.3 885.0 668.8 880.0C670.3 875.0 672.3 870.4 673.8 865.0C675.2 859.6 676.3 854.0 677.5 847.5C678.7 841.0 680.6 829.8 681.2 826.2"/></svg>
</body></html>
